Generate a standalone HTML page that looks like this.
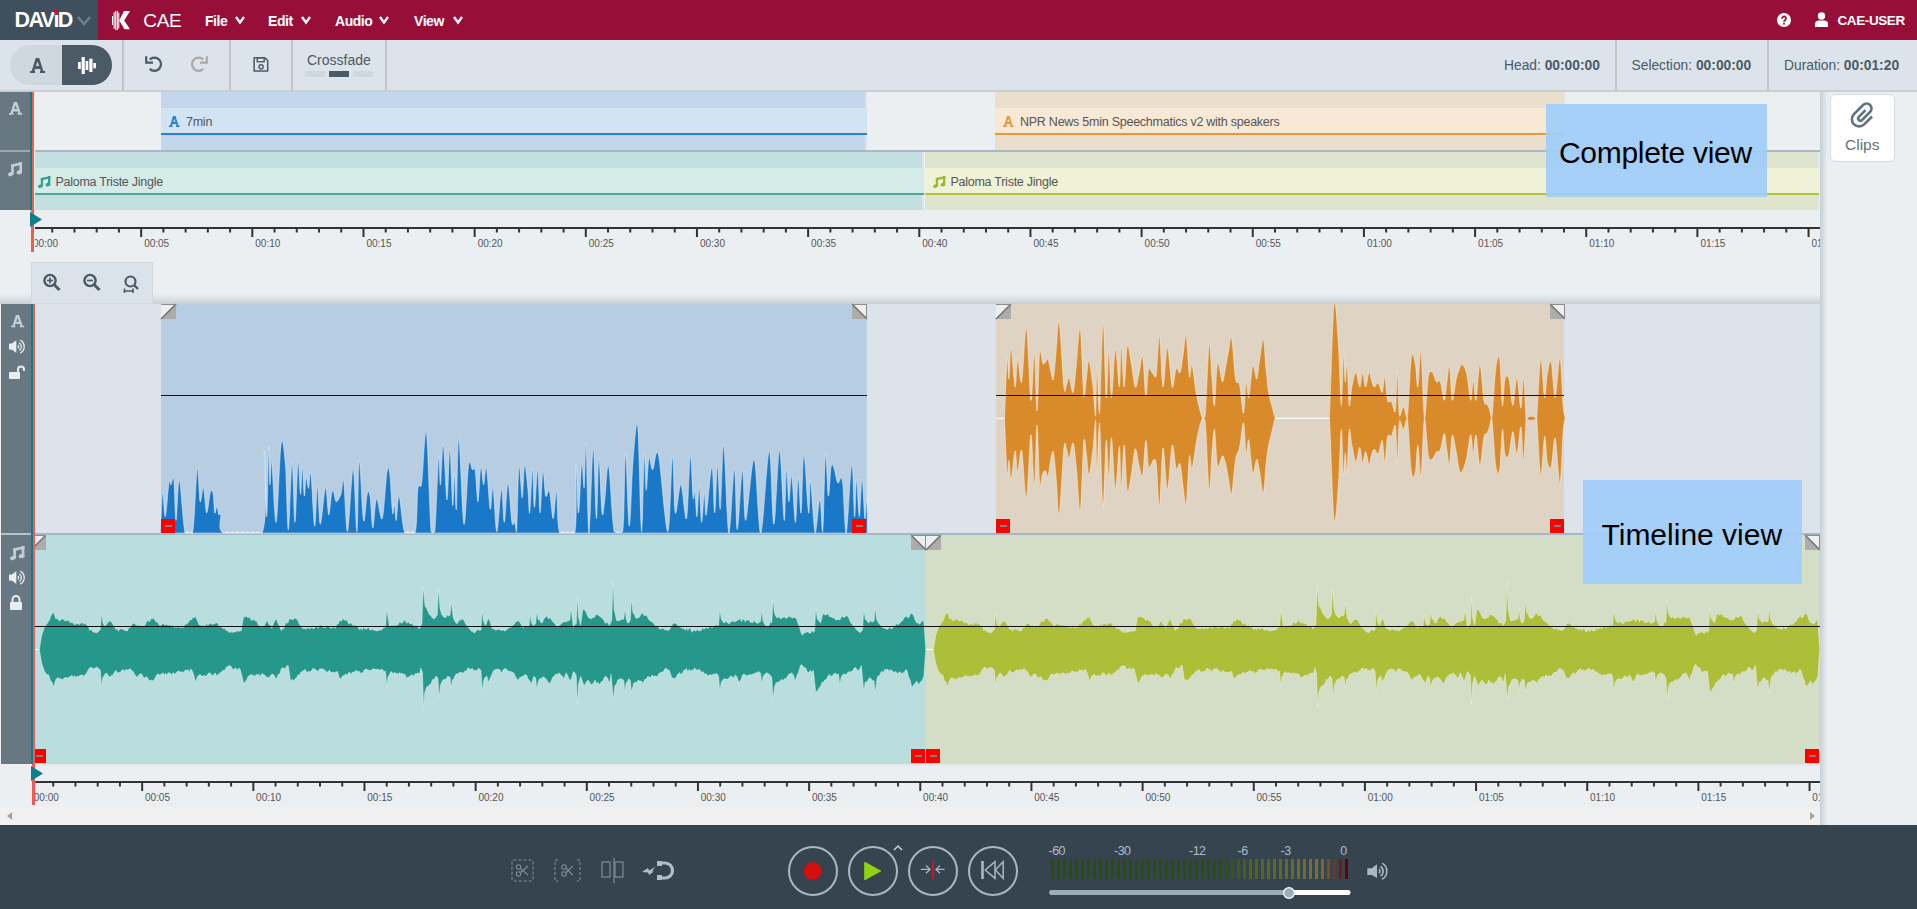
<!DOCTYPE html><html><head><meta charset="utf-8"><style>
*{margin:0;padding:0;box-sizing:border-box}
html,body{width:1917px;height:909px;overflow:hidden;background:#ebeff2;font-family:"Liberation Sans",sans-serif;position:relative}
.ab{position:absolute}
.t{position:absolute;white-space:nowrap;line-height:1}
svg{position:absolute;overflow:visible}
</style></head><body>
<div class="ab" style="left:0px;top:0px;width:1917px;height:40px;background:#970f38;"></div>
<div class="ab" style="left:0px;top:0px;width:98px;height:40px;background:#3e4f5d;"></div>
<div class="t" style="left:14.5px;top:9.50px;font-size:21.5px;color:#fff;font-weight:700;letter-spacing:-1.6px">DAV&#305;D</div>
<div class="ab" style="left:54px;top:10px;width:3px;height:3px;background:#e3001b;"></div>
<svg style="left:77px;top:15.5px;" width="14" height="9" viewBox="0 0 14 9"><polyline points="1,1 7.0,8 13,1" fill="none" stroke="#6a7f8d" stroke-width="2.6"/></svg>
<svg style="left:111px;top:10px;" width="20" height="21" viewBox="0 0 20 21"><g fill="#fff"><rect x="1" y="6" width="1.1" height="9"/><rect x="2.6" y="2.2" width="1.1" height="16.6"/><rect x="4.2" y="0.9" width="1.1" height="19.2"/><rect x="5.8" y="0.9" width="1.1" height="19.2"/><rect x="7.3" y="2.6" width="1" height="15.8"/><polygon points="13,1 19,1 13.2,10.4 19,19.2 13.5,19.2 8.2,10.4"/></g></svg>
<div class="t" style="left:143.3px;top:10.82px;font-size:19px;color:#fff;font-weight:400;letter-spacing:-0.3px">CAE</div>
<div class="t" style="left:205px;top:13.65px;font-size:14px;color:#fff;font-weight:700;letter-spacing:-0.45px">File</div>
<svg style="left:235px;top:16.3px;" width="10" height="7.5" viewBox="0 0 10 7.5"><polyline points="1,1 5.0,6.5 9,1" fill="none" stroke="#fff" stroke-width="2.3"/></svg>
<div class="t" style="left:268px;top:13.65px;font-size:14px;color:#fff;font-weight:700;letter-spacing:-0.45px">Edit</div>
<svg style="left:301px;top:16.3px;" width="10" height="7.5" viewBox="0 0 10 7.5"><polyline points="1,1 5.0,6.5 9,1" fill="none" stroke="#fff" stroke-width="2.3"/></svg>
<div class="t" style="left:335px;top:13.65px;font-size:14px;color:#fff;font-weight:700;letter-spacing:-0.45px">Audio</div>
<svg style="left:379px;top:16.3px;" width="10" height="7.5" viewBox="0 0 10 7.5"><polyline points="1,1 5.0,6.5 9,1" fill="none" stroke="#fff" stroke-width="2.3"/></svg>
<div class="t" style="left:414px;top:13.65px;font-size:14px;color:#fff;font-weight:700;letter-spacing:-0.45px">View</div>
<svg style="left:453px;top:16.3px;" width="10" height="7.5" viewBox="0 0 10 7.5"><polyline points="1,1 5.0,6.5 9,1" fill="none" stroke="#fff" stroke-width="2.3"/></svg>
<svg style="left:1777px;top:13px;" width="14" height="14" viewBox="0 0 14 14"><circle cx="7" cy="7" r="7" fill="#fff"/><g transform="translate(7,7.3) scale(0.86) translate(-7,-6.8)"><path d="M4.7,5 A2.35,2.35 0 1 1 8.4,6.6 Q7,7.3 7,8.6" fill="none" stroke="#970f38" stroke-width="2"/><rect x="6" y="9.7" width="2" height="2" fill="#970f38"/></g></svg>
<svg style="left:1814px;top:12px;" width="15" height="16" viewBox="0 0 15 16"><circle cx="7.5" cy="4" r="3.7" fill="#fff"/><path d="M1,15 V12 C1,9.5 3,8.6 4.8,8.6 H10.2 C12,8.6 14,9.5 14,12 V15 Z" fill="#fff"/></svg>
<div class="t" style="left:1837.5px;top:13.57px;font-size:13.5px;color:#fff;font-weight:700;letter-spacing:-0.4px">CAE-USER</div>
<div class="ab" style="left:0px;top:40px;width:1917px;height:51px;background:#dce3ea;"></div>
<div class="ab" style="left:0px;top:90px;width:1917px;height:2px;background:#c9cfd4;"></div>
<div class="ab" style="left:10px;top:45px;width:102px;height:40px;background:#d0d8df;border-radius:20px"></div>
<div class="ab" style="left:62px;top:45px;width:50px;height:40px;background:#4a5a67;border-radius:0 20px 20px 0"></div>
<svg style="left:29.9px;top:57.9px;" width="15.1" height="15" viewBox="0 0 15.1 15"><path transform="scale(1.0000,1.0000)" fill-rule="evenodd" fill="#4a5a67" d="M5.7,0 H9.2 L13.4,13 H15.1 V15 H10.0 V13 H10.7 L10.1,11 H5.0 L4.4,13 H5.1 V15 H0 V13 H1.7 Z M6.0,8.1 H9.1 L7.55,3.6 Z"/></svg>
<svg style="left:0px;top:0px;" width="120" height="90" viewBox="0 0 120 90"><g fill="#fff"><rect x="78" y="62" width="2.8" height="7"/><rect x="81.6" y="57" width="3.2" height="17"/><rect x="85.6" y="61" width="2.7" height="9"/><rect x="89.3" y="58.7" width="3.2" height="13.3"/><rect x="93.3" y="63" width="2.7" height="5.3"/></g></svg>
<div class="ab" style="left:122px;top:40px;width:2px;height:51px;background:#c4c6c6;"></div>
<div class="ab" style="left:229px;top:40px;width:2px;height:51px;background:#c4c6c6;"></div>
<div class="ab" style="left:291px;top:40px;width:2px;height:51px;background:#c4c6c6;"></div>
<div class="ab" style="left:385px;top:40px;width:2px;height:51px;background:#c4c6c6;"></div>
<svg style="left:144px;top:55px;" width="20" height="18" viewBox="0 0 20 18"><path d="M2.2,1.2 V7.6 H9" fill="none" stroke="#4a5a67" stroke-width="2.2"/><path d="M5.73,4.53 A6.6,6.6 0 1 1 5.73,13.87" fill="none" stroke="#4a5a67" stroke-width="2.2"/></svg>
<svg style="left:188.5px;top:55px;" width="20" height="18" viewBox="0 0 20 18"><g transform="translate(20,0) scale(-1,1)"><path d="M2.2,1.2 V7.6 H9" fill="none" stroke="#aaaaaa" stroke-width="2.2"/><path d="M5.73,4.53 A6.6,6.6 0 1 1 5.73,13.87" fill="none" stroke="#aaaaaa" stroke-width="2.2"/></g></svg>
<svg style="left:253px;top:57px;" width="16" height="15" viewBox="0 0 16 15"><path d="M1.1,0.8 H11.9 L14.7,3.6 V14.1 H1.1 Z" fill="none" stroke="#4a5a67" stroke-width="1.5" stroke-linejoin="round"/><rect x="4.2" y="0.8" width="7" height="3.9" fill="none" stroke="#4a5a67" stroke-width="1.4"/><circle cx="8.1" cy="9.8" r="2.1" fill="none" stroke="#4a5a67" stroke-width="1.4"/></svg>
<div class="t" style="left:307px;top:53.15px;font-size:14px;color:#4a5a67;font-weight:400;">Crossfade</div>
<div class="ab" style="left:305px;top:71px;width:20px;height:6px;background:#d0d8df;"></div>
<div class="ab" style="left:329px;top:71px;width:20px;height:6px;background:#4a5a67;"></div>
<div class="ab" style="left:353px;top:71px;width:20px;height:6px;background:#d0d8df;"></div>
<div class="t" style="left:1504px;top:58.82px;font-size:13.8px;color:#4a5a67;font-weight:400;">Head: <b style="font-weight:700">00:00:00</b></div>
<div class="t" style="left:1631.5px;top:58.82px;font-size:13.8px;color:#4a5a67;font-weight:400;">Selection: <b style="font-weight:700">00:00:00</b></div>
<div class="t" style="left:1784px;top:58.82px;font-size:13.8px;color:#4a5a67;font-weight:400;">Duration: <b style="font-weight:700">00:01:20</b></div>
<div class="ab" style="left:1615px;top:40px;width:2px;height:51px;background:#c4c6c6;"></div>
<div class="ab" style="left:1767px;top:40px;width:2px;height:51px;background:#c4c6c6;"></div>
<div class="ab" style="left:0px;top:92px;width:30px;height:118px;background:#687883;"></div>
<div class="ab" style="left:0px;top:150px;width:30px;height:2px;background:#9aa9b3;"></div>
<svg style="left:8.6px;top:102.2px;" width="13.2" height="12.8" viewBox="0 0 13.2 12.8"><path transform="scale(0.8742,0.8533)" fill-rule="evenodd" fill="#c2ced6" d="M5.7,0 H9.2 L13.4,13 H15.1 V15 H10.0 V13 H10.7 L10.1,11 H5.0 L4.4,13 H5.1 V15 H0 V13 H1.7 Z M6.0,8.1 H9.1 L7.55,3.6 Z"/></svg>
<svg style="left:8px;top:162px;" width="14" height="14.2" viewBox="0 0 14 14.2"><g transform="scale(1.0000,1.0000)" fill="#c2ced6"><polygon points="3.2,2.5 14,0 14,2.8 3.2,5.3"/><rect x="3.2" y="2.5" width="2.6" height="10"/><rect x="11.4" y="0" width="2.6" height="11.5"/><ellipse cx="2.7" cy="12.2" rx="2.7" ry="2" transform="rotate(-18 2.7 12.2)"/><ellipse cx="11.3" cy="10.2" rx="2.75" ry="2.1" transform="rotate(-18 11.3 10.2)"/></g></svg>
<div class="ab" style="left:865px;top:92px;width:2px;height:58px;background:#dfe4e8;"></div>
<div class="ab" style="left:161px;top:92px;width:704px;height:58px;background:#c2d7eb;"></div>
<div class="ab" style="left:161px;top:108px;width:706px;height:25px;background:#d2e4f4;"></div>
<div class="ab" style="left:161px;top:133px;width:706px;height:2px;background:#2b7fd1;"></div>
<svg style="left:168.8px;top:115.9px;" width="10.7" height="11" viewBox="0 0 10.7 11"><path transform="scale(0.7086,0.7333)" fill-rule="evenodd" fill="#2b7fd1" d="M5.7,0 H9.2 L13.4,13 H15.1 V15 H10.0 V13 H10.7 L10.1,11 H5.0 L4.4,13 H5.1 V15 H0 V13 H1.7 Z M6.0,8.1 H9.1 L7.55,3.6 Z"/></svg>
<div class="t" style="left:186px;top:115.72px;font-size:12.5px;color:#555;font-weight:400;letter-spacing:-0.25px">7min</div>
<div class="ab" style="left:1563px;top:92px;width:2px;height:58px;background:#dfe4e8;"></div>
<div class="ab" style="left:995px;top:92px;width:568px;height:58px;background:#e9dfcc;"></div>
<div class="ab" style="left:995px;top:108px;width:570px;height:25px;background:#f8e9d6;"></div>
<div class="ab" style="left:995px;top:133px;width:570px;height:2px;background:#e8963a;"></div>
<svg style="left:1002.8px;top:115.9px;" width="10.7" height="11" viewBox="0 0 10.7 11"><path transform="scale(0.7086,0.7333)" fill-rule="evenodd" fill="#e8963a" d="M5.7,0 H9.2 L13.4,13 H15.1 V15 H10.0 V13 H10.7 L10.1,11 H5.0 L4.4,13 H5.1 V15 H0 V13 H1.7 Z M6.0,8.1 H9.1 L7.55,3.6 Z"/></svg>
<div class="t" style="left:1020px;top:115.72px;font-size:12.5px;color:#555;font-weight:400;letter-spacing:-0.25px">NPR News 5min Speechmatics v2 with speakers</div>
<div class="ab" style="left:35px;top:150px;width:1785px;height:2px;background:#a9b8c4;"></div>
<div class="ab" style="left:922px;top:152px;width:2px;height:58px;background:#dfe4e8;"></div>
<div class="ab" style="left:35px;top:152px;width:887px;height:58px;background:#c3dfdf;"></div>
<div class="ab" style="left:35px;top:168px;width:889px;height:25px;background:#d5ebe7;"></div>
<div class="ab" style="left:35px;top:193px;width:889px;height:2px;background:#4aa79a;"></div>
<svg style="left:37.9px;top:175.7px;" width="12.3" height="11.9" viewBox="0 0 12.3 11.9"><g transform="scale(0.8786,0.8380)" fill="#3a9e8f"><polygon points="3.2,2.5 14,0 14,2.8 3.2,5.3"/><rect x="3.2" y="2.5" width="2.6" height="10"/><rect x="11.4" y="0" width="2.6" height="11.5"/><ellipse cx="2.7" cy="12.2" rx="2.7" ry="2" transform="rotate(-18 2.7 12.2)"/><ellipse cx="11.3" cy="10.2" rx="2.75" ry="2.1" transform="rotate(-18 11.3 10.2)"/></g></svg>
<div class="t" style="left:55.4px;top:176.02px;font-size:12.5px;color:#555;font-weight:400;letter-spacing:-0.25px">Paloma Triste Jingle</div>
<div class="ab" style="left:1817px;top:152px;width:2px;height:58px;background:#dfe4e8;"></div>
<div class="ab" style="left:925px;top:152px;width:892px;height:58px;background:#dfe5cc;"></div>
<div class="ab" style="left:925px;top:168px;width:894px;height:25px;background:#eff2d6;"></div>
<div class="ab" style="left:925px;top:193px;width:894px;height:2px;background:#b3c33c;"></div>
<svg style="left:932.9px;top:175.7px;" width="12.3" height="11.9" viewBox="0 0 12.3 11.9"><g transform="scale(0.8786,0.8380)" fill="#9fb52e"><polygon points="3.2,2.5 14,0 14,2.8 3.2,5.3"/><rect x="3.2" y="2.5" width="2.6" height="10"/><rect x="11.4" y="0" width="2.6" height="11.5"/><ellipse cx="2.7" cy="12.2" rx="2.7" ry="2" transform="rotate(-18 2.7 12.2)"/><ellipse cx="11.3" cy="10.2" rx="2.75" ry="2.1" transform="rotate(-18 11.3 10.2)"/></g></svg>
<div class="t" style="left:950.4px;top:176.02px;font-size:12.5px;color:#555;font-weight:400;letter-spacing:-0.25px">Paloma Triste Jingle</div>
<svg style="left:30px;top:227px;" width="1790" height="12" viewBox="0 0 1790 12"><rect x="5" y="0" width="1785" height="2" fill="#333"/><rect x="21.23" y="2" width="2" height="3.5" fill="#333"/><rect x="43.46" y="2" width="2" height="3.5" fill="#333"/><rect x="65.70" y="2" width="2" height="3.5" fill="#333"/><rect x="87.93" y="2" width="2" height="3.5" fill="#333"/><rect x="110.16" y="2" width="2" height="8" fill="#333"/><rect x="132.39" y="2" width="2" height="3.5" fill="#333"/><rect x="154.62" y="2" width="2" height="3.5" fill="#333"/><rect x="176.86" y="2" width="2" height="3.5" fill="#333"/><rect x="199.09" y="2" width="2" height="3.5" fill="#333"/><rect x="221.32" y="2" width="2" height="8" fill="#333"/><rect x="243.55" y="2" width="2" height="3.5" fill="#333"/><rect x="265.78" y="2" width="2" height="3.5" fill="#333"/><rect x="288.02" y="2" width="2" height="3.5" fill="#333"/><rect x="310.25" y="2" width="2" height="3.5" fill="#333"/><rect x="332.48" y="2" width="2" height="8" fill="#333"/><rect x="354.71" y="2" width="2" height="3.5" fill="#333"/><rect x="376.94" y="2" width="2" height="3.5" fill="#333"/><rect x="399.18" y="2" width="2" height="3.5" fill="#333"/><rect x="421.41" y="2" width="2" height="3.5" fill="#333"/><rect x="443.64" y="2" width="2" height="8" fill="#333"/><rect x="465.87" y="2" width="2" height="3.5" fill="#333"/><rect x="488.10" y="2" width="2" height="3.5" fill="#333"/><rect x="510.34" y="2" width="2" height="3.5" fill="#333"/><rect x="532.57" y="2" width="2" height="3.5" fill="#333"/><rect x="554.80" y="2" width="2" height="8" fill="#333"/><rect x="577.03" y="2" width="2" height="3.5" fill="#333"/><rect x="599.26" y="2" width="2" height="3.5" fill="#333"/><rect x="621.50" y="2" width="2" height="3.5" fill="#333"/><rect x="643.73" y="2" width="2" height="3.5" fill="#333"/><rect x="665.96" y="2" width="2" height="8" fill="#333"/><rect x="688.19" y="2" width="2" height="3.5" fill="#333"/><rect x="710.42" y="2" width="2" height="3.5" fill="#333"/><rect x="732.66" y="2" width="2" height="3.5" fill="#333"/><rect x="754.89" y="2" width="2" height="3.5" fill="#333"/><rect x="777.12" y="2" width="2" height="8" fill="#333"/><rect x="799.35" y="2" width="2" height="3.5" fill="#333"/><rect x="821.58" y="2" width="2" height="3.5" fill="#333"/><rect x="843.82" y="2" width="2" height="3.5" fill="#333"/><rect x="866.05" y="2" width="2" height="3.5" fill="#333"/><rect x="888.28" y="2" width="2" height="8" fill="#333"/><rect x="910.51" y="2" width="2" height="3.5" fill="#333"/><rect x="932.74" y="2" width="2" height="3.5" fill="#333"/><rect x="954.98" y="2" width="2" height="3.5" fill="#333"/><rect x="977.21" y="2" width="2" height="3.5" fill="#333"/><rect x="999.44" y="2" width="2" height="8" fill="#333"/><rect x="1021.67" y="2" width="2" height="3.5" fill="#333"/><rect x="1043.90" y="2" width="2" height="3.5" fill="#333"/><rect x="1066.14" y="2" width="2" height="3.5" fill="#333"/><rect x="1088.37" y="2" width="2" height="3.5" fill="#333"/><rect x="1110.60" y="2" width="2" height="8" fill="#333"/><rect x="1132.83" y="2" width="2" height="3.5" fill="#333"/><rect x="1155.06" y="2" width="2" height="3.5" fill="#333"/><rect x="1177.30" y="2" width="2" height="3.5" fill="#333"/><rect x="1199.53" y="2" width="2" height="3.5" fill="#333"/><rect x="1221.76" y="2" width="2" height="8" fill="#333"/><rect x="1243.99" y="2" width="2" height="3.5" fill="#333"/><rect x="1266.22" y="2" width="2" height="3.5" fill="#333"/><rect x="1288.46" y="2" width="2" height="3.5" fill="#333"/><rect x="1310.69" y="2" width="2" height="3.5" fill="#333"/><rect x="1332.92" y="2" width="2" height="8" fill="#333"/><rect x="1355.15" y="2" width="2" height="3.5" fill="#333"/><rect x="1377.38" y="2" width="2" height="3.5" fill="#333"/><rect x="1399.62" y="2" width="2" height="3.5" fill="#333"/><rect x="1421.85" y="2" width="2" height="3.5" fill="#333"/><rect x="1444.08" y="2" width="2" height="8" fill="#333"/><rect x="1466.31" y="2" width="2" height="3.5" fill="#333"/><rect x="1488.54" y="2" width="2" height="3.5" fill="#333"/><rect x="1510.78" y="2" width="2" height="3.5" fill="#333"/><rect x="1533.01" y="2" width="2" height="3.5" fill="#333"/><rect x="1555.24" y="2" width="2" height="8" fill="#333"/><rect x="1577.47" y="2" width="2" height="3.5" fill="#333"/><rect x="1599.70" y="2" width="2" height="3.5" fill="#333"/><rect x="1621.94" y="2" width="2" height="3.5" fill="#333"/><rect x="1644.17" y="2" width="2" height="3.5" fill="#333"/><rect x="1666.40" y="2" width="2" height="8" fill="#333"/><rect x="1688.63" y="2" width="2" height="3.5" fill="#333"/><rect x="1710.86" y="2" width="2" height="3.5" fill="#333"/><rect x="1733.10" y="2" width="2" height="3.5" fill="#333"/><rect x="1755.33" y="2" width="2" height="3.5" fill="#333"/><rect x="1777.56" y="2" width="2" height="8" fill="#333"/></svg>
<div class="ab" style="left:35px;top:227px;width:1785px;height:30px;overflow:hidden"><div class="t" style="left:-2.00px;top:12.03px;font-size:10px;color:#555">00:00</div><div class="t" style="left:109.16px;top:12.03px;font-size:10px;color:#555">00:05</div><div class="t" style="left:220.32px;top:12.03px;font-size:10px;color:#555">00:10</div><div class="t" style="left:331.48px;top:12.03px;font-size:10px;color:#555">00:15</div><div class="t" style="left:442.64px;top:12.03px;font-size:10px;color:#555">00:20</div><div class="t" style="left:553.80px;top:12.03px;font-size:10px;color:#555">00:25</div><div class="t" style="left:664.96px;top:12.03px;font-size:10px;color:#555">00:30</div><div class="t" style="left:776.12px;top:12.03px;font-size:10px;color:#555">00:35</div><div class="t" style="left:887.28px;top:12.03px;font-size:10px;color:#555">00:40</div><div class="t" style="left:998.44px;top:12.03px;font-size:10px;color:#555">00:45</div><div class="t" style="left:1109.60px;top:12.03px;font-size:10px;color:#555">00:50</div><div class="t" style="left:1220.76px;top:12.03px;font-size:10px;color:#555">00:55</div><div class="t" style="left:1331.92px;top:12.03px;font-size:10px;color:#555">01:00</div><div class="t" style="left:1443.08px;top:12.03px;font-size:10px;color:#555">01:05</div><div class="t" style="left:1554.24px;top:12.03px;font-size:10px;color:#555">01:10</div><div class="t" style="left:1665.40px;top:12.03px;font-size:10px;color:#555">01:15</div><div class="t" style="left:1776.56px;top:12.03px;font-size:10px;color:#555">01:20</div></div>
<div class="ab" style="left:31px;top:92px;width:3px;height:160px;background:#f25a54;"></div>
<div class="ab" style="left:30px;top:92px;width:2px;height:118px;background:#0c7f8c;"></div>
<svg style="left:30px;top:212px;" width="12" height="15" viewBox="0 0 12 15"><polygon points="0,0 12,7.5 0,15" fill="#0c7f8c"/></svg>
<div class="ab" style="left:0px;top:294px;width:1820px;height:10px;background:linear-gradient(to bottom, rgba(215,221,226,0) 0%, rgba(210,216,222,0.6) 50%, rgba(200,207,213,1) 100%);"></div>
<div class="ab" style="left:31px;top:262px;width:122px;height:42px;background:#dce2e9;border:1px solid #d3d9df"></div>
<svg style="left:43px;top:273px;" width="17" height="17" viewBox="0 0 17 17"><circle cx="7" cy="7.5" r="5.6" fill="none" stroke="#4a5a67" stroke-width="2.4"/><line x1="11" y1="11.5" x2="16.5" y2="17" stroke="#4a5a67" stroke-width="3"/><line x1="4" y1="7.5" x2="10" y2="7.5" stroke="#4a5a67" stroke-width="1.7"/><line x1="7" y1="4.5" x2="7" y2="10.5" stroke="#4a5a67" stroke-width="1.7"/></svg>
<svg style="left:83px;top:273px;" width="17" height="17" viewBox="0 0 17 17"><circle cx="7" cy="7.5" r="5.6" fill="none" stroke="#4a5a67" stroke-width="2.4"/><line x1="11" y1="11.5" x2="16.5" y2="17" stroke="#4a5a67" stroke-width="3"/><line x1="4" y1="7.5" x2="10" y2="7.5" stroke="#4a5a67" stroke-width="1.7"/></svg>
<svg style="left:123px;top:275px;" width="17" height="19" viewBox="0 0 17 19"><circle cx="7.5" cy="6.5" r="5" fill="none" stroke="#4a5a67" stroke-width="2.2"/><line x1="11" y1="10" x2="15" y2="14" stroke="#4a5a67" stroke-width="2.4"/><path d="M1.5,13.5 V18 M1.5,16 H10 M10,13.5 V18" fill="none" stroke="#4a5a67" stroke-width="1.6"/></svg>
<div class="ab" style="left:1px;top:304px;width:30px;height:460px;background:#687883;"></div>
<div class="ab" style="left:1px;top:533px;width:30px;height:2px;background:#b3c3cd;"></div>
<div class="ab" style="left:35px;top:304px;width:1785px;height:229px;background:#dce3ea;"></div>
<div class="ab" style="left:35px;top:535px;width:1785px;height:229px;background:#dce3ea;"></div>
<div class="ab" style="left:35px;top:533px;width:1785px;height:2px;background:#a3b8c6;"></div>
<div class="ab" style="left:161px;top:304px;width:706px;height:229px;background:#b7cde2;"></div>
<div class="ab" style="left:996px;top:304px;width:568px;height:229px;background:#dfd4c3;"></div>
<div class="ab" style="left:35px;top:535px;width:891px;height:229px;background:#b9dedd;"></div>
<div class="ab" style="left:926px;top:535px;width:894px;height:229px;background:#d4ddc5;"></div>
<svg style="left:0;top:0" width="1917" height="909" viewBox="0 0 1917 909"><line x1="161" y1="532.2" x2="866" y2="532.2" stroke="#fff" stroke-opacity="0.8" stroke-width="1" stroke-dasharray="3,2"/><path d="M160.6,533L160.6,533.0C160.9,526.2 161.7,495.0 162.5,492.3C163.3,489.6 164.2,518.4 165.3,516.7C166.4,515.0 168.1,487.3 169.1,482.0C170.0,476.7 170.2,485.3 171.0,484.8C171.7,484.3 172.9,473.2 173.8,479.2C174.6,485.1 175.1,520.3 176.0,520.4C177.0,520.6 177.9,478.0 179.4,480.1C180.9,482.2 182.9,524.2 185.0,533.0C187.2,533.0 190.5,533.0 192.6,533.0C194.6,522.3 196.0,474.1 197.3,468.8C198.5,463.6 199.0,498.5 200.1,501.7C201.1,504.8 202.4,485.7 203.5,487.6C204.5,489.5 205.5,512.1 206.6,512.9C207.8,513.7 209.3,495.4 210.4,492.3C211.5,489.2 212.5,490.7 213.2,494.2C213.9,497.6 214.1,510.9 214.7,512.9C215.3,515.0 216.3,506.0 217.0,506.4C217.7,506.7 218.2,513.4 218.8,514.8C219.5,516.2 219.9,511.8 220.7,514.8C221.5,517.8 216.7,530.0 223.5,533.0C230.4,533.0 255.3,533.0 262.0,533.0C268.8,519.3 263.5,453.7 264.3,451.0C265.1,448.3 266.0,517.4 266.7,516.7C267.5,516.0 268.1,452.2 268.6,446.9C269.1,441.6 269.4,482.2 269.9,484.8C270.5,487.3 270.8,456.0 271.8,462.3C272.8,468.5 274.6,525.4 276.1,522.3C277.7,519.2 279.6,452.9 281.2,443.5C282.8,434.1 284.3,451.6 285.5,466.0C286.7,480.4 287.2,530.4 288.3,529.8C289.4,529.2 291.0,463.5 292.1,462.3C293.2,461.0 293.9,522.5 294.9,522.3C295.9,522.1 297.2,466.0 298.1,461.3C299.0,456.6 299.8,493.4 300.5,494.2C301.3,494.9 301.8,465.7 302.4,466.0C303.0,466.3 303.7,494.2 304.3,496.0C304.9,497.9 305.5,478.5 306.2,477.3C306.9,476.0 307.8,489.2 308.6,488.5C309.4,487.9 309.9,467.3 310.9,473.5C311.9,479.8 313.5,524.0 314.6,526.1C315.7,528.1 316.5,486.0 317.4,485.7C318.4,485.4 318.9,523.9 320.3,524.2C321.6,524.5 324.1,489.2 325.5,487.6C326.9,486.0 327.7,513.7 328.7,514.8C329.7,515.9 330.7,498.1 331.5,494.2C332.3,490.3 332.6,490.1 333.4,491.3C334.2,492.6 335.0,501.2 336.2,501.7C337.5,502.1 339.7,497.6 340.9,494.2C342.2,490.7 342.6,474.8 343.7,481.0C344.8,487.3 345.9,533.0 347.5,531.7C349.1,529.7 351.6,468.8 353.1,468.8C354.7,468.8 355.8,533.0 356.9,531.7C357.9,530.3 358.2,462.3 359.3,460.4C360.4,458.5 362.1,514.8 363.5,520.4C364.8,526.1 366.1,498.2 367.2,494.2C368.3,490.1 369.1,490.4 370.0,496.0C371.0,501.7 371.7,527.5 372.8,527.9C373.9,528.4 375.0,500.4 376.6,498.9C378.2,497.3 380.5,522.9 382.2,518.6C384.0,514.2 385.7,480.1 386.9,472.6C388.2,465.1 388.8,466.8 389.7,473.5C390.7,480.2 391.8,507.8 392.6,512.9C393.3,518.1 393.8,503.2 394.4,504.5C395.1,505.7 395.5,521.8 396.3,520.4C397.1,519.0 397.7,493.9 399.1,496.0C400.5,498.1 402.1,526.8 404.8,533.0C407.4,533.0 412.9,533.0 415.1,533.0C417.3,525.6 416.8,496.9 417.9,488.5C419.0,480.2 420.3,492.3 421.7,482.9C423.1,473.5 424.8,424.1 426.4,432.2C427.9,440.4 429.6,515.1 431.1,531.7C432.5,533.0 433.6,533.0 434.8,531.7C436.1,519.3 437.6,465.4 438.6,457.6C439.5,449.8 439.7,487.0 440.4,484.8C441.2,482.6 442.2,441.9 443.3,444.4C444.4,446.9 445.9,499.2 447.0,499.8C448.1,500.4 448.9,447.3 449.8,448.2C450.8,449.1 451.9,501.2 452.7,505.4C453.4,509.6 453.9,472.9 454.5,473.5C455.2,474.2 455.7,515.1 456.4,509.2C457.1,503.2 457.6,435.4 458.8,437.9C460.1,440.4 462.3,519.6 463.9,524.2C465.5,528.7 467.2,474.2 468.6,465.1C470.0,456.0 471.3,468.8 472.4,469.8C473.5,470.7 474.2,465.4 475.2,470.7C476.1,476.0 477.1,502.3 478.0,501.7C478.9,501.0 479.9,469.8 480.8,467.0C481.8,464.1 482.7,484.6 483.6,484.8C484.6,484.9 485.4,463.8 486.5,467.9C487.6,472.0 489.1,505.9 490.2,509.2C491.3,512.5 491.9,483.8 493.0,487.6C494.1,491.3 495.4,531.5 496.8,531.7C498.2,531.8 500.2,490.1 501.5,488.5C502.7,487.0 503.2,523.2 504.3,522.3C505.4,521.4 506.8,482.9 508.1,482.9C509.3,482.9 510.8,515.7 511.9,522.3C513.0,528.9 513.9,520.7 514.7,522.3C515.5,523.9 515.9,533.0 516.6,531.7C517.3,522.3 518.1,471.6 519.0,466.0C520.0,460.4 521.3,498.1 522.2,497.9C523.1,497.8 523.7,466.6 524.6,465.1C525.6,463.5 527.0,480.6 527.8,488.5C528.7,496.5 528.9,516.4 529.7,512.9C530.5,509.5 531.8,468.8 532.5,467.9C533.3,467.0 533.5,507.1 534.4,507.3C535.3,507.5 536.9,467.9 537.8,468.8C538.7,469.8 539.2,512.6 540.0,512.9C540.9,513.2 541.9,473.5 542.9,470.7C543.8,467.9 544.6,492.6 545.7,496.0C546.8,499.5 548.2,487.6 549.4,491.3C550.7,495.1 552.0,518.6 553.2,518.6C554.4,518.6 555.5,488.9 556.6,491.3C557.7,493.8 556.7,526.1 559.8,533.0C562.8,533.0 572.1,533.0 574.8,533.0C577.5,521.7 575.5,468.4 576.1,465.1C576.7,461.7 577.6,513.2 578.5,512.9C579.5,512.6 580.8,467.4 581.7,463.2C582.7,459.0 583.5,490.8 584.2,487.6C584.9,484.4 585.3,436.3 586.1,443.9C586.8,451.4 587.7,532.4 588.9,533.0C590.1,533.0 591.9,449.7 593.2,447.3C594.4,444.9 595.4,516.8 596.4,518.6C597.3,520.3 597.9,458.5 598.8,457.6C599.8,456.6 601.0,505.9 602.0,512.9C603.0,520.0 603.7,507.6 604.8,499.8C605.9,492.0 607.0,460.7 608.6,466.0C610.2,471.3 611.9,520.7 614.2,531.7C616.6,533.0 620.8,533.0 622.7,531.7C624.6,518.7 624.4,454.8 625.5,453.8C626.6,452.9 628.0,524.8 629.2,526.1C630.5,527.3 631.6,477.9 633.0,461.3C634.4,444.8 636.3,414.9 637.7,426.6C639.1,438.3 640.4,527.0 641.5,531.7C642.6,533.0 643.5,461.6 644.3,454.8C645.1,447.9 645.4,489.8 646.2,490.4C646.9,491.0 647.9,462.0 649.0,458.5C650.1,455.1 651.2,470.4 652.7,469.8C654.3,469.1 655.9,444.4 658.4,454.8C660.9,465.1 665.4,531.4 667.7,531.7C670.1,532.0 671.2,459.8 672.4,456.6C673.7,453.5 673.8,508.2 675.3,512.9C676.7,517.6 679.0,483.8 680.9,484.8C682.8,485.7 685.0,523.4 686.5,518.6C688.1,513.7 689.2,459.1 690.3,455.7C691.4,452.3 692.3,492.1 693.1,497.9C693.9,503.7 694.4,487.3 695.0,490.4C695.6,493.5 696.1,517.3 696.9,516.7C697.6,516.1 698.5,485.7 699.3,486.7C700.1,487.6 700.7,521.4 701.5,522.3C702.4,523.2 703.6,493.5 704.4,492.3C705.1,491.0 705.0,519.0 706.2,514.8C707.5,510.6 710.5,467.3 711.9,467.0C713.3,466.6 713.8,513.2 714.7,512.9C715.6,512.6 716.6,465.7 717.5,465.1C718.5,464.5 719.3,512.6 720.3,509.2C721.4,505.7 722.3,440.5 723.7,444.4C725.1,448.4 727.0,528.9 728.8,533.0C730.6,533.0 733.0,469.4 734.4,468.8C735.8,468.3 735.9,529.7 737.2,529.8C738.6,530.0 741.1,471.3 742.5,469.8C743.9,468.2 743.7,522.1 745.7,520.4C747.6,518.7 751.6,457.4 754.1,459.5C756.6,461.5 758.2,533.0 760.7,533.0C763.2,531.6 767.0,452.5 769.2,451.0C771.3,449.5 772.1,524.3 773.8,524.2C775.6,524.0 777.8,450.7 779.5,450.1C781.2,449.4 783.0,517.3 784.2,520.4C785.3,523.6 785.6,472.0 786.4,468.8C787.2,465.7 788.0,500.4 788.9,501.7C789.7,502.9 790.6,472.9 791.7,476.3C792.8,479.8 794.4,522.1 795.4,522.3C796.5,522.5 797.3,478.8 798.3,477.3C799.2,475.7 800.1,516.8 801.1,512.9C802.0,509.0 802.6,453.8 803.9,453.8C805.1,453.8 807.5,508.4 808.6,512.9C809.7,517.5 809.4,477.7 810.5,481.0C811.6,484.4 813.6,530.0 815.2,533.0C816.7,533.0 818.6,499.1 819.9,498.9C821.1,498.6 821.7,533.0 822.7,531.7C823.6,524.3 824.6,460.7 825.5,454.8C826.4,448.8 827.4,494.0 828.3,496.0C829.2,498.1 830.2,471.6 831.1,467.0C832.1,462.3 832.8,465.2 833.9,467.9C835.0,470.6 836.3,480.7 837.7,482.9C839.1,485.1 841.0,472.7 842.4,481.0C843.8,489.4 844.6,533.0 846.2,533.0C847.7,530.2 850.4,466.9 851.8,464.1C853.2,461.4 853.8,514.2 854.6,516.7C855.4,519.2 855.7,479.2 856.5,479.2C857.3,479.2 858.4,516.7 859.3,516.7C860.2,516.7 861.2,478.8 862.1,479.2C863.1,479.5 864.1,515.4 864.9,518.6C865.7,521.7 866.4,495.5 866.8,497.9C867.2,500.3 867.3,527.2 867.4,533.0L867.4,533Z" fill="#1a78c8" stroke="#fff" stroke-opacity="0.55" stroke-width="0.8"/><line x1="996" y1="418.3" x2="1564" y2="418.3" stroke="#fff" stroke-width="1"/><path d="M1004.5,418.3L1004.5,418.3C1005.0,408.5 1006.4,365.9 1007.2,359.4C1007.9,352.9 1008.4,381.2 1009.0,379.2C1009.7,377.2 1010.1,346.2 1011.1,347.5C1012.1,348.9 1014.0,385.2 1015.1,387.1C1016.2,389.1 1016.6,360.3 1017.7,359.4C1018.8,358.5 1020.2,387.1 1021.7,381.9C1023.1,376.6 1024.9,324.6 1026.4,327.7C1028.0,330.8 1029.6,396.2 1030.9,400.3C1032.2,404.5 1033.4,351.1 1034.4,352.8C1035.4,354.6 1036.1,410.9 1037.0,410.9C1037.9,410.9 1038.7,360.7 1039.6,352.8C1040.6,344.9 1041.8,361.8 1042.8,363.4C1043.8,365.0 1044.6,362.9 1045.5,362.3C1046.3,361.6 1047.2,357.9 1048.1,359.4C1049.0,360.9 1049.9,367.8 1050.7,371.1C1051.6,374.4 1052.5,382.7 1053.4,379.2C1054.3,375.7 1055.3,359.5 1056.3,350.1C1057.2,340.6 1057.9,316.3 1059.2,322.4C1060.5,328.6 1062.7,376.8 1063.9,387.1C1065.2,397.5 1065.7,386.2 1066.6,384.7C1067.5,383.1 1068.1,376.6 1069.2,377.9C1070.3,379.2 1071.9,395.3 1073.2,392.4C1074.4,389.5 1075.6,371.1 1076.7,360.6C1077.9,350.0 1079.1,323.3 1080.3,329.0C1081.5,334.8 1082.7,386.8 1083.7,395.1C1084.8,403.3 1085.5,384.3 1086.4,378.6C1087.3,372.8 1087.9,359.3 1089.0,360.7C1090.1,362.2 1091.9,377.9 1093.0,387.1C1094.1,396.4 1095.0,418.3 1095.6,416.2C1096.3,412.7 1096.3,366.5 1096.9,366.0C1097.6,365.6 1098.6,418.3 1099.6,413.5C1100.6,406.1 1101.9,323.8 1103.0,321.1C1104.1,318.5 1105.2,392.9 1106.2,397.7C1107.2,402.5 1107.9,350.2 1108.8,350.2C1109.7,350.2 1110.4,397.9 1111.5,397.7C1112.6,397.5 1114.1,350.6 1115.4,348.9C1116.7,347.1 1118.4,387.8 1119.4,387.1C1120.4,386.5 1120.4,344.9 1121.2,344.9C1122.0,344.9 1123.1,386.9 1124.1,387.1C1125.2,387.4 1126.1,350.2 1127.3,346.2C1128.5,342.3 1130.0,356.6 1131.3,363.4C1132.6,370.2 1134.0,385.3 1135.2,387.1C1136.5,388.9 1137.7,379.2 1138.9,374.2C1140.2,369.1 1141.5,353.1 1142.6,356.8C1143.8,360.5 1144.8,394.2 1145.8,396.4C1146.8,398.6 1147.6,374.2 1148.4,370.0C1149.3,365.8 1150.2,370.4 1151.1,371.3C1152.0,372.1 1152.8,374.5 1153.7,374.9C1154.6,375.4 1155.4,380.5 1156.4,373.9C1157.3,367.4 1158.4,333.4 1159.5,335.6C1160.6,337.8 1161.6,385.2 1163.0,387.1C1164.3,389.1 1165.9,347.5 1167.4,347.5C1169.0,347.5 1170.7,383.6 1172.2,387.1C1173.7,390.7 1174.8,371.1 1176.2,368.7C1177.5,366.2 1179.0,375.0 1180.1,372.6C1181.3,370.3 1182.1,360.6 1183.2,354.5C1184.2,348.3 1185.2,332.0 1186.2,335.6C1187.2,339.3 1188.4,371.7 1189.4,376.6C1190.3,381.4 1190.9,362.1 1192.0,364.7C1193.1,367.3 1194.8,385.3 1196.0,392.4C1197.2,399.6 1198.2,403.2 1199.3,407.5C1200.4,411.8 1201.6,416.9 1202.6,418.3C1203.6,418.3 1204.1,418.3 1205.2,416.2C1206.3,403.7 1208.1,350.2 1209.2,343.6C1210.3,337.0 1210.9,366.3 1211.8,376.6C1212.7,387.0 1213.5,407.8 1214.5,405.6C1215.4,403.4 1216.3,367.3 1217.6,363.4C1218.9,359.4 1221.1,381.1 1222.4,381.9C1223.7,382.6 1224.4,372.8 1225.5,367.7C1226.5,362.6 1227.5,356.1 1228.5,351.2C1229.6,346.3 1230.4,333.6 1231.6,338.3C1232.8,343.0 1234.3,371.5 1235.6,379.2C1236.9,386.9 1238.2,378.8 1239.5,384.5C1240.9,390.2 1242.4,414.0 1243.5,413.5C1244.6,413.1 1245.3,384.5 1246.1,381.9C1247.0,379.2 1247.7,400.3 1248.8,397.7C1249.9,395.1 1251.4,369.1 1252.7,366.0C1254.1,362.9 1255.6,379.9 1256.7,379.2C1257.8,378.6 1258.2,368.7 1259.3,362.1C1260.4,355.5 1262.2,338.6 1263.3,339.6C1264.4,340.6 1265.1,359.1 1265.9,367.9C1266.8,376.7 1267.5,385.7 1268.6,392.4C1269.7,399.2 1271.4,404.0 1272.5,408.3C1273.6,412.6 1274.3,416.6 1275.2,418.3C1276.1,418.3 1276.9,418.3 1277.8,418.3C1278.6,418.3 1279.5,418.3 1280.4,418.3C1281.2,418.3 1282.1,418.3 1282.9,418.3C1283.8,418.3 1284.7,418.3 1285.5,418.3C1286.4,418.3 1287.2,418.3 1288.1,418.3C1289.0,418.3 1289.8,418.3 1290.7,418.3C1291.5,418.3 1292.4,418.3 1293.3,418.3C1294.1,418.3 1295.0,418.3 1295.8,418.3C1296.7,418.3 1297.6,418.3 1298.4,418.3C1299.3,418.3 1300.1,418.3 1301.0,418.3C1301.9,418.3 1302.7,418.3 1303.6,418.3C1304.5,418.3 1305.3,418.3 1306.2,418.3C1307.0,418.3 1307.9,418.3 1308.8,418.3C1309.6,418.3 1310.5,418.3 1311.3,418.3C1312.2,418.3 1313.1,418.3 1313.9,418.3C1314.8,418.3 1315.6,418.3 1316.5,418.3C1317.4,418.3 1318.2,418.3 1319.1,418.3C1319.9,418.3 1320.8,418.3 1321.7,418.3C1322.5,418.3 1323.4,418.3 1324.2,418.3C1325.1,418.3 1326.0,418.3 1326.8,418.3C1327.7,418.3 1328.2,418.3 1329.4,418.3C1330.6,399.5 1332.5,318.4 1333.9,305.3C1335.4,292.2 1336.9,322.9 1338.1,339.6C1339.4,356.3 1340.4,403.0 1341.3,405.6C1342.2,408.3 1342.7,359.4 1343.4,355.5C1344.1,351.5 1344.6,380.5 1345.3,381.9C1345.9,383.2 1346.4,359.4 1347.1,363.4C1347.8,367.3 1348.4,401.7 1349.2,405.6C1350.0,409.6 1350.8,392.6 1351.9,387.1C1353.0,381.6 1354.5,372.6 1355.8,372.6C1357.1,372.6 1358.7,387.1 1359.8,387.1C1360.9,387.1 1361.5,372.6 1362.4,372.6C1363.4,372.6 1364.5,387.1 1365.6,387.1C1366.7,387.1 1368.0,373.6 1369.0,372.6C1370.0,371.6 1370.8,378.8 1371.7,381.3C1372.5,383.7 1373.2,386.8 1374.3,387.1C1375.4,387.5 1376.9,382.3 1378.3,383.2C1379.6,384.1 1381.1,393.5 1382.2,392.4C1383.3,391.3 1384.0,375.3 1384.9,376.6C1385.7,377.9 1386.4,396.2 1387.5,400.3C1388.6,404.5 1390.1,399.9 1391.5,401.7C1392.8,403.4 1394.5,416.0 1395.4,410.9C1396.4,405.8 1396.6,370.4 1397.3,371.3C1397.9,372.2 1398.4,410.2 1399.4,416.2C1400.4,418.3 1402.0,406.6 1403.4,406.9C1404.7,407.3 1406.0,418.3 1407.3,418.3C1408.6,410.2 1410.0,367.2 1411.3,358.1C1412.6,348.9 1414.1,358.5 1415.2,363.4C1416.3,368.2 1416.9,389.1 1417.9,387.1C1418.8,385.2 1419.9,346.3 1421.0,351.5C1422.1,356.7 1423.2,414.1 1424.5,418.3C1425.7,418.3 1427.1,384.2 1428.4,376.6C1429.8,369.0 1431.1,371.7 1432.4,372.6C1433.7,373.5 1435.0,380.3 1436.4,381.9C1437.7,383.4 1439.0,378.8 1440.3,381.9C1441.6,384.9 1443.2,400.2 1444.3,400.3C1445.4,400.5 1446.0,388.3 1446.9,382.5C1447.8,376.8 1448.7,363.0 1449.6,366.0C1450.4,369.0 1451.1,398.1 1452.2,400.3C1453.3,402.5 1455.0,384.3 1456.2,379.2C1457.3,374.1 1458.2,372.1 1459.2,369.7C1460.2,367.3 1461.0,364.0 1462.2,364.7C1463.5,365.4 1465.3,368.0 1466.7,373.9C1468.1,379.9 1469.6,399.2 1470.7,400.3C1471.8,401.4 1472.4,380.5 1473.3,380.5C1474.2,380.5 1474.9,403.0 1476.0,400.3C1477.1,397.7 1478.6,364.7 1479.9,364.7C1481.2,364.7 1482.8,393.8 1483.9,400.3C1485.0,406.9 1485.7,402.6 1486.5,403.9C1487.4,405.2 1488.3,405.9 1489.2,408.3C1490.1,410.7 1490.7,418.3 1491.8,418.3C1492.9,411.7 1494.5,378.5 1495.8,368.7C1497.1,358.8 1498.6,353.3 1499.7,359.4C1500.8,365.6 1501.5,402.3 1502.4,405.6C1503.3,408.9 1503.9,383.6 1505.0,379.2C1506.1,374.8 1507.7,374.8 1509.0,379.2C1510.3,383.6 1511.6,405.8 1512.9,405.6C1514.3,405.4 1515.6,377.5 1516.9,377.9C1518.2,378.3 1519.8,408.3 1520.9,408.3C1522.0,408.3 1522.6,376.2 1523.5,377.9C1524.4,379.6 1525.3,411.8 1526.1,418.3C1527.0,418.3 1527.9,417.1 1528.8,416.7C1529.7,416.4 1530.5,416.2 1531.4,416.2C1532.3,416.2 1533.2,416.4 1534.1,416.7C1534.9,417.1 1535.6,418.3 1536.7,418.3C1537.8,408.7 1539.3,362.8 1540.7,359.4C1542.0,356.0 1543.5,395.3 1544.6,397.7C1545.7,400.1 1546.2,379.9 1547.3,373.9C1548.4,368.0 1549.9,358.1 1551.2,362.1C1552.5,366.0 1553.7,398.4 1555.2,397.7C1556.6,397.0 1558.6,356.8 1559.9,358.1C1561.3,359.4 1562.2,395.6 1563.1,405.6C1564.0,415.7 1564.9,416.2 1565.2,418.3L1565.2,418.3C1564.9,420.5 1564.0,420.8 1563.1,431.6C1562.2,442.4 1561.3,481.9 1559.9,483.0C1558.6,484.1 1556.6,441.1 1555.2,438.3C1553.7,435.5 1552.5,462.6 1551.2,466.5C1549.9,470.3 1548.4,466.5 1547.3,461.6C1546.2,456.6 1545.7,434.2 1544.6,436.5C1543.5,438.8 1542.0,478.5 1540.7,475.5C1539.3,472.5 1537.8,427.6 1536.7,418.3C1535.6,418.3 1534.9,419.5 1534.1,419.9C1533.2,420.2 1532.3,420.4 1531.4,420.4C1530.5,420.4 1529.7,420.2 1528.8,419.9C1527.9,419.5 1527.0,418.3 1526.1,418.3C1525.3,425.2 1524.4,460.0 1523.5,461.5C1522.6,462.9 1522.0,428.1 1520.9,426.9C1519.8,425.7 1518.2,453.4 1516.9,454.1C1515.6,454.9 1514.3,431.5 1512.9,431.5C1511.6,431.4 1510.3,450.0 1509.0,453.9C1507.7,457.8 1506.1,458.7 1505.0,454.6C1503.9,450.5 1503.3,426.9 1502.4,429.4C1501.5,431.9 1500.8,463.4 1499.7,469.5C1498.6,475.6 1497.1,474.6 1495.8,466.0C1494.5,457.5 1492.9,424.7 1491.8,418.3C1490.7,418.3 1490.1,425.3 1489.2,427.9C1488.3,430.5 1487.4,432.3 1486.5,433.8C1485.7,435.3 1485.0,431.8 1483.9,437.1C1482.8,442.3 1481.2,465.7 1479.9,465.4C1478.6,465.0 1477.1,437.1 1476.0,435.1C1474.9,433.1 1474.2,453.5 1473.3,453.4C1472.4,453.3 1471.8,433.9 1470.7,434.6C1469.6,435.3 1468.1,451.4 1466.7,457.5C1465.3,463.7 1463.5,469.5 1462.2,471.4C1461.0,473.4 1460.2,472.6 1459.2,469.4C1458.2,466.1 1457.3,457.5 1456.2,451.7C1455.0,446.0 1453.3,433.0 1452.2,435.1C1451.1,437.1 1450.4,461.5 1449.6,464.0C1448.7,466.4 1447.8,455.0 1446.9,449.9C1446.0,444.9 1445.4,433.6 1444.3,433.6C1443.2,433.5 1441.6,446.6 1440.3,449.7C1439.0,452.8 1437.7,450.6 1436.4,452.1C1435.0,453.6 1433.7,458.2 1432.4,458.8C1431.1,459.4 1429.8,462.5 1428.4,455.8C1427.1,449.0 1425.7,418.3 1424.5,418.3C1423.2,421.7 1422.1,471.6 1421.0,476.1C1419.9,480.6 1418.8,445.8 1417.9,445.2C1416.9,444.7 1416.3,468.7 1415.2,473.0C1414.1,477.3 1412.6,480.0 1411.3,470.9C1410.0,461.8 1408.6,425.3 1407.3,418.3C1406.0,418.3 1404.7,428.6 1403.4,429.0C1402.0,429.3 1400.4,418.3 1399.4,420.4C1398.4,426.0 1397.9,461.6 1397.3,462.5C1396.6,463.4 1396.4,430.4 1395.4,425.9C1394.5,421.5 1392.8,434.0 1391.5,435.8C1390.1,437.6 1388.6,432.3 1387.5,436.8C1386.4,441.2 1385.7,461.8 1384.9,462.4C1384.0,463.0 1383.3,442.1 1382.2,440.6C1381.1,439.2 1379.6,452.2 1378.3,453.6C1376.9,455.0 1375.4,449.1 1374.3,449.2C1373.2,449.3 1372.5,451.6 1371.7,454.2C1370.8,456.7 1370.0,464.8 1369.0,464.4C1368.0,464.0 1366.7,451.8 1365.6,451.6C1364.5,451.4 1363.4,463.8 1362.4,463.1C1361.5,462.4 1360.9,447.7 1359.8,447.4C1358.7,447.2 1357.1,462.0 1355.8,461.5C1354.5,461.1 1353.0,450.1 1351.9,444.8C1350.8,439.5 1350.0,425.2 1349.2,429.8C1348.4,434.4 1347.8,468.5 1347.1,472.4C1346.4,476.3 1345.9,452.9 1345.3,453.3C1344.6,453.8 1344.1,479.0 1343.4,475.1C1342.7,471.2 1342.2,427.5 1341.3,429.7C1340.4,432.0 1339.4,473.6 1338.1,488.4C1336.9,503.1 1335.4,530.0 1333.9,518.3C1332.5,506.6 1330.6,435.0 1329.4,418.3C1328.2,418.3 1327.7,418.3 1326.8,418.3C1326.0,418.3 1325.1,418.3 1324.2,418.3C1323.4,418.3 1322.5,418.3 1321.7,418.3C1320.8,418.3 1319.9,418.3 1319.1,418.3C1318.2,418.3 1317.4,418.3 1316.5,418.3C1315.6,418.3 1314.8,418.3 1313.9,418.3C1313.1,418.3 1312.2,418.3 1311.3,418.3C1310.5,418.3 1309.6,418.3 1308.8,418.3C1307.9,418.3 1307.0,418.3 1306.2,418.3C1305.3,418.3 1304.5,418.3 1303.6,418.3C1302.7,418.3 1301.9,418.3 1301.0,418.3C1300.1,418.3 1299.3,418.3 1298.4,418.3C1297.6,418.3 1296.7,418.3 1295.8,418.3C1295.0,418.3 1294.1,418.3 1293.3,418.3C1292.4,418.3 1291.5,418.3 1290.7,418.3C1289.8,418.3 1289.0,418.3 1288.1,418.3C1287.2,418.3 1286.4,418.3 1285.5,418.3C1284.7,418.3 1283.8,418.3 1282.9,418.3C1282.1,418.3 1281.2,418.3 1280.4,418.3C1279.5,418.3 1278.6,418.3 1277.8,418.3C1276.9,418.3 1276.1,418.3 1275.2,418.3C1274.3,420.1 1273.6,424.5 1272.5,429.0C1271.4,433.6 1269.7,439.5 1268.6,445.6C1267.5,451.6 1266.8,457.4 1265.9,465.3C1265.1,473.2 1264.4,492.0 1263.3,492.7C1262.2,493.4 1260.4,475.3 1259.3,469.7C1258.2,464.1 1257.8,458.8 1256.7,459.3C1255.6,459.8 1254.1,475.8 1252.7,472.6C1251.4,469.4 1249.9,443.1 1248.8,440.0C1247.7,436.9 1247.0,456.7 1246.1,453.9C1245.3,451.0 1244.6,423.9 1243.5,422.8C1242.4,421.8 1240.9,441.6 1239.5,447.7C1238.2,453.7 1236.9,451.7 1235.6,459.4C1234.3,467.0 1232.8,490.2 1231.6,493.5C1230.4,496.8 1229.6,484.3 1228.5,479.2C1227.5,474.1 1226.5,466.7 1225.5,462.8C1224.4,458.9 1223.7,455.2 1222.4,455.7C1221.1,456.2 1218.9,470.1 1217.6,465.7C1216.3,461.3 1215.4,431.2 1214.5,429.4C1213.5,427.7 1212.7,445.3 1211.8,455.3C1210.9,465.4 1210.3,495.6 1209.2,489.8C1208.1,483.9 1206.3,432.3 1205.2,420.4C1204.1,418.3 1203.6,418.3 1202.6,418.3C1201.6,419.5 1200.4,423.2 1199.3,427.5C1198.2,431.9 1197.2,437.4 1196.0,444.3C1194.8,451.1 1193.1,466.6 1192.0,468.6C1190.9,470.7 1190.3,450.6 1189.4,456.5C1188.4,462.4 1187.2,499.1 1186.2,504.2C1185.2,509.3 1184.2,493.8 1183.2,487.1C1182.1,480.4 1181.3,467.0 1180.1,463.9C1179.0,460.8 1177.5,471.6 1176.2,468.5C1174.8,465.4 1173.7,441.8 1172.2,445.2C1170.7,448.7 1169.0,488.8 1167.4,489.3C1165.9,489.8 1164.3,445.3 1163.0,448.2C1161.6,451.1 1160.6,503.8 1159.5,506.5C1158.4,509.2 1157.3,472.4 1156.4,464.6C1155.4,456.8 1154.6,459.7 1153.7,459.7C1152.8,459.7 1152.0,463.5 1151.1,464.6C1150.2,465.6 1149.3,470.0 1148.4,466.0C1147.6,462.0 1146.8,438.9 1145.8,440.4C1144.8,441.9 1143.8,471.0 1142.6,475.0C1141.5,479.1 1140.2,469.1 1138.9,464.7C1137.7,460.3 1136.5,447.2 1135.2,448.9C1134.0,450.5 1132.6,467.7 1131.3,474.6C1130.0,481.6 1128.5,495.6 1127.3,490.7C1126.1,485.7 1125.2,445.3 1124.1,445.1C1123.1,444.8 1122.0,488.8 1121.2,489.0C1120.4,489.1 1120.4,445.8 1119.4,445.9C1118.4,446.0 1116.7,490.8 1115.4,489.4C1114.1,488.1 1112.6,439.7 1111.5,437.8C1110.4,435.9 1109.7,477.6 1108.8,478.1C1107.9,478.5 1107.2,435.6 1106.2,440.5C1105.2,445.3 1104.1,510.2 1103.0,507.3C1101.9,504.4 1100.6,428.8 1099.6,423.1C1098.6,418.3 1097.6,473.7 1096.9,473.3C1096.3,472.8 1096.3,424.5 1095.6,420.4C1095.0,418.3 1094.1,439.5 1093.0,448.5C1091.9,457.6 1090.1,473.9 1089.0,474.8C1087.9,475.8 1087.3,459.8 1086.4,454.3C1085.5,448.8 1084.8,432.4 1083.7,441.8C1082.7,451.1 1081.5,505.5 1080.3,510.5C1079.1,515.4 1077.9,482.6 1076.7,471.4C1075.6,460.1 1074.4,445.2 1073.2,443.0C1071.9,440.8 1070.3,457.0 1069.2,458.1C1068.1,459.1 1067.5,451.0 1066.6,449.3C1065.7,447.6 1065.2,436.9 1063.9,447.8C1062.7,458.8 1060.5,509.5 1059.2,514.8C1057.9,520.1 1057.2,490.0 1056.3,479.5C1055.3,469.1 1054.3,455.5 1053.4,452.1C1052.5,448.7 1051.6,455.2 1050.7,459.1C1049.9,463.1 1049.0,473.8 1048.1,475.8C1047.2,477.7 1046.3,471.2 1045.5,470.7C1044.6,470.3 1043.8,471.1 1042.8,473.1C1041.8,475.1 1040.6,490.8 1039.6,482.7C1038.7,474.7 1037.9,424.3 1037.0,424.9C1036.1,425.5 1035.4,484.6 1034.4,486.3C1033.4,487.9 1032.2,432.9 1030.9,434.8C1029.6,436.8 1028.0,495.1 1026.4,497.7C1024.9,500.3 1023.1,454.7 1021.7,450.5C1020.2,446.2 1018.8,472.2 1017.7,472.3C1016.6,472.4 1016.2,449.8 1015.1,450.9C1014.0,452.1 1012.1,477.7 1011.1,479.2C1010.1,480.8 1009.7,461.2 1009.0,460.3C1008.4,459.4 1007.9,480.7 1007.2,473.7C1006.4,466.7 1005.0,427.5 1004.5,418.3Z" fill="#d98b2b" stroke="#fff" stroke-opacity="0.5" stroke-width="0.8"/><line x1="35" y1="649.5" x2="1820" y2="649.5" stroke="#fff" stroke-width="1"/><path d="M39.4,649.5L39.4,649.5L41.7,635.4L44.1,628.4L45.4,625.3L46.8,624.5L48.1,621.8L49.5,620.2L50.8,615.7L52.1,614.2L53.5,611.9L55.8,619.0L57.2,618.3L58.5,620.3L59.8,621.0L61.2,619.2L62.5,618.9L63.9,619.7L65.2,621.3L66.5,620.4L67.8,620.6L69.1,621.1L70.4,623.1L71.7,622.3L73.0,623.1L74.3,624.5L75.6,624.7L76.9,623.2L78.3,624.2L79.6,624.5L81.0,623.2L82.3,622.5L83.7,624.6L85.0,623.0L86.3,624.9L88.1,626.0L89.9,630.7L91.2,629.3L92.6,631.6L94.0,632.3L95.3,632.5L96.7,632.8L98.1,631.9L100.4,629.6L101.6,613.1L102.7,622.2L103.9,625.2L105.1,626.0L106.6,624.4L108.1,622.2L109.5,621.3L111.0,621.3L112.6,624.1L114.1,626.3L115.7,629.5L117.0,628.6L118.3,631.3L119.6,629.4L121.0,628.7L122.3,629.3L123.6,629.5L124.9,630.7L126.2,630.7L127.6,630.7L129.0,627.3L130.4,627.8L131.7,624.9L133.1,623.2L134.5,623.7L135.9,624.9L137.4,625.8L138.9,624.7L140.3,627.2L141.6,625.5L142.9,626.6L144.2,625.8L145.5,624.8L146.8,621.2L148.2,620.6L149.5,622.1L150.8,618.7L152.1,619.0L153.4,618.1L154.7,620.1L156.1,622.0L157.4,622.2L158.8,624.5L160.1,625.8L161.5,624.9L162.8,623.3L164.1,624.6L165.5,625.3L166.8,624.0L168.2,625.9L169.5,624.5L170.8,626.0L172.1,625.0L173.5,627.3L174.8,627.3L176.1,627.3L177.4,627.6L178.7,626.5L180.0,627.8L181.3,627.4L182.6,627.2L183.9,627.5L185.2,623.6L186.5,624.6L187.7,623.1L189.0,621.6L190.3,619.4L191.6,620.1L192.9,617.2L194.2,617.7L195.5,616.6L197.3,620.6L199.0,624.9L200.3,624.7L201.5,626.4L202.8,624.8L204.0,625.7L205.3,626.2L206.5,623.3L207.8,625.5L209.0,624.3L210.3,623.3L211.5,623.9L212.8,624.6L214.0,623.8L215.3,623.6L216.5,622.7L217.8,623.7L219.1,626.1L220.4,625.5L221.7,627.7L223.0,628.7L224.3,627.9L225.6,629.9L226.9,630.8L228.2,631.1L229.5,633.1L230.8,631.3L232.1,632.8L233.4,631.9L234.7,632.0L236.1,631.7L237.4,630.8L238.7,631.4L240.0,630.9L241.3,630.7L243.6,616.6L244.9,617.2L246.2,616.1L247.5,617.5L248.8,617.4L250.1,617.7L251.4,620.6L252.7,620.1L254.0,619.2L255.4,621.3L256.8,621.3L258.2,625.0L259.6,626.2L261.0,626.2L262.4,627.2L264.0,626.4L265.5,623.4L267.1,620.2L268.7,624.4L270.2,625.0L271.8,628.4L273.3,624.2L274.9,620.7L276.5,619.0L278.0,624.1L279.6,626.0L281.2,630.7L282.5,628.5L283.9,628.7L285.2,624.3L286.5,622.3L287.9,623.3L289.2,619.0L290.6,619.0L292.0,619.6L293.4,619.5L294.8,617.9L296.2,618.7L297.6,620.2L299.2,624.1L300.7,625.9L302.3,628.4L303.5,628.2L304.8,628.7L306.0,629.1L307.2,628.6L308.4,627.0L309.7,629.4L310.9,627.4L312.1,627.7L313.4,629.1L314.6,627.9L315.8,626.7L317.1,627.0L318.3,628.5L319.5,625.1L320.7,625.7L322.0,624.9L323.2,627.9L324.4,627.2L325.7,627.9L326.9,625.1L328.1,626.0L329.5,627.3L330.9,628.3L332.3,627.7L333.8,626.4L335.2,628.4L336.7,624.5L338.3,623.8L339.9,620.2L341.3,621.4L342.8,618.6L344.3,619.9L345.7,620.2L347.0,620.3L348.3,623.3L349.6,624.2L350.9,622.8L352.2,624.5L353.5,626.6L354.8,624.3L356.1,626.2L357.3,626.5L358.6,628.4L359.9,629.9L361.1,627.2L362.3,630.1L363.6,627.3L364.8,628.8L366.1,629.3L367.3,628.6L368.5,627.3L369.8,629.8L371.0,630.3L372.2,629.0L373.5,630.1L374.7,630.6L375.9,630.5L377.2,630.9L378.4,630.4L379.6,630.1L380.9,630.2L382.1,629.5L383.9,627.4L385.6,627.2L386.8,609.6L389.2,626.0L390.4,626.4L391.7,625.3L392.9,626.1L394.2,625.1L395.5,626.0L396.7,624.8L398.0,625.2L399.3,622.3L400.5,622.6L401.8,623.5L403.1,622.1L404.3,620.1L405.6,621.3L406.9,623.4L408.1,621.5L409.4,623.5L410.7,623.9L412.0,623.3L413.3,625.6L414.5,625.8L415.8,625.8L417.1,625.4L418.4,628.3L419.7,628.4L422.0,623.4L423.2,587.3L425.0,606.2L426.3,607.7L427.7,610.8L429.1,614.3L430.6,615.4L432.2,617.8L433.8,619.0L435.5,617.7L437.3,615.3L438.5,588.5L439.9,608.2L441.5,614.0L443.1,616.6L444.5,617.6L446.0,617.5L447.4,614.8L448.8,616.2L450.2,614.9L451.4,602.6L453.1,617.3L454.5,620.7L455.9,623.1L457.2,623.7L458.7,621.3L460.2,620.0L461.6,619.5L463.1,619.0L464.6,622.1L466.0,624.6L467.5,626.8L469.0,628.4L470.2,629.4L471.4,631.3L472.6,631.2L473.8,632.7L475.0,632.7L476.5,630.4L478.0,629.6L479.5,630.5L481.0,630.0L482.2,609.9L483.3,620.8L484.5,624.1L485.8,625.5L488.2,618.3L490.0,621.4L491.8,627.9L493.1,628.9L494.5,629.0L495.8,630.5L497.1,629.4L498.5,629.3L499.8,629.5L501.1,630.8L502.5,630.0L503.8,630.3L505.1,631.2L506.4,629.4L507.7,629.2L509.0,627.2L510.3,627.6L511.7,626.8L513.0,624.9L514.3,624.3L515.6,622.1L516.9,621.5L518.2,620.7L519.8,622.2L521.4,624.9L523.0,627.9L524.5,626.7L526.0,625.7L527.5,627.1L529.0,626.3L530.2,614.7L531.3,622.3L532.5,624.5L533.8,625.5L535.7,623.8L536.9,611.1L538.1,619.5L539.6,619.6L541.0,623.1L542.5,622.6L544.0,618.7L545.5,617.2L547.0,615.9L548.4,619.1L549.7,617.8L551.1,619.1L552.5,621.6L553.9,622.8L555.2,624.0L556.6,626.7L558.0,627.3L559.3,625.2L560.7,624.6L562.1,622.8L563.5,622.2L564.8,621.4L566.2,621.9L568.0,620.8L569.8,620.3L571.0,608.7L573.4,627.9L574.8,624.6L576.3,624.2L577.5,596.7L578.4,616.9L580.6,625.5L583.0,608.7L584.4,610.0L585.9,611.8L587.3,615.4L588.8,618.1L590.2,618.3L591.6,618.9L593.1,617.4L594.5,617.6L596.0,614.2L597.4,614.7L598.7,615.7L600.1,616.6L601.4,617.8L602.7,618.9L604.1,620.7L605.4,623.7L606.7,622.0L608.1,623.4L609.4,625.5L611.8,620.3L613.0,582.3L614.1,609.2L615.3,614.9L616.6,620.7L619.0,620.7L620.6,620.1L622.2,619.2L623.8,619.3L625.0,608.7L626.1,618.8L627.3,622.5L628.6,623.1L630.3,620.2L631.5,599.1L632.8,612.5L634.3,614.6L635.8,618.3L637.2,618.2L638.7,617.9L640.1,616.3L641.5,613.6L643.0,613.5L644.3,615.9L645.7,615.3L647.0,615.8L648.3,618.9L649.7,620.6L651.0,621.6L652.3,622.2L653.7,623.2L655.0,625.5L656.3,625.6L657.7,626.1L659.0,628.6L660.3,628.9L661.7,629.1L663.0,627.8L664.3,629.9L665.7,629.5L667.0,630.3L668.4,630.6L669.9,629.0L671.3,626.8L672.7,623.9L674.2,623.1L675.6,623.4L677.1,624.4L678.5,626.7L679.9,626.9L681.4,627.9L682.7,628.4L684.0,628.7L685.3,630.3L686.6,627.8L687.9,630.6L689.2,628.1L690.5,628.6L691.9,632.3L693.2,631.0L694.5,630.0L695.8,631.5L697.2,629.3L698.5,630.7L699.9,630.8L701.3,630.5L702.6,627.3L704.0,629.5L705.4,627.9L706.7,627.4L708.0,628.8L709.3,627.2L710.7,625.4L712.0,628.1L713.3,625.5L714.6,626.4L715.9,624.8L717.3,625.2L718.6,625.7L719.8,609.9L721.2,619.1L722.9,622.1L724.6,623.1L725.9,621.3L727.2,622.5L728.5,623.8L729.8,623.6L731.1,621.5L732.4,621.3L733.7,621.5L735.1,621.8L736.4,620.7L737.7,620.5L739.0,619.5L740.3,618.5L741.5,621.8L742.8,619.3L744.1,619.2L745.4,622.1L746.7,619.4L747.9,620.4L749.2,620.0L750.5,622.4L751.8,622.4L753.1,622.5L754.3,620.6L755.6,622.3L756.9,623.4L758.2,623.1L760.6,621.5L761.8,609.9L762.9,620.8L764.1,623.4L765.4,625.5L766.7,625.7L768.0,625.9L769.3,625.1L770.6,621.9L771.9,622.5L773.1,600.3L774.4,612.9L775.9,616.4L777.4,618.3L778.8,616.5L780.3,618.7L781.7,618.4L783.1,617.3L784.6,617.1L785.9,618.5L787.2,618.1L788.6,616.3L789.9,616.8L791.2,617.3L792.6,618.2L793.9,617.5L795.2,617.6L796.6,619.5L798.2,624.1L799.8,628.3L801.4,633.9L802.7,635.2L804.0,632.5L805.3,633.2L806.7,631.8L808.0,631.9L809.3,632.9L810.6,633.4L811.9,629.9L813.3,632.5L814.6,630.9L815.8,608.7L817.2,618.8L818.9,621.0L820.6,623.1L823.0,613.5L824.3,614.6L825.6,615.3L826.9,614.3L828.2,614.0L829.5,617.1L830.8,616.2L832.1,618.0L833.4,617.7L834.8,618.8L836.1,620.2L837.4,619.5L838.8,620.1L840.2,619.4L841.6,616.2L843.0,617.1L844.4,617.5L845.8,615.9L847.1,616.0L848.4,617.2L849.7,620.7L851.0,623.3L852.3,624.6L853.6,626.5L854.9,627.2L856.2,629.6L857.6,630.6L858.9,632.0L860.2,632.7L862.6,630.0L863.8,609.9L865.2,619.1L866.9,620.9L868.6,623.1L869.9,621.2L871.3,621.3L872.7,622.0L874.1,621.2L875.3,607.5L876.5,619.3L877.9,622.1L879.4,624.3L881.2,626.0L883.0,627.9L884.3,628.3L885.7,628.5L887.1,629.5L888.5,628.7L889.8,626.2L891.2,629.2L892.6,627.9L893.8,626.9L895.1,625.5L896.4,623.7L897.7,625.1L899.0,623.9L900.2,623.0L901.5,621.5L902.8,620.4L904.1,617.6L905.4,617.0L906.6,616.0L907.9,618.1L909.2,617.1L910.5,613.7L911.8,613.5L913.4,615.3L915.0,620.0L916.6,623.1L918.0,622.5L919.4,624.4L920.9,622.8L922.3,620.6L923.8,621.9L925.7,649.5L925.7,649.5L923.8,676.3L922.2,680.4L920.6,681.4L919.0,684.7L916.6,681.1L915.0,683.6L913.4,685.2L911.8,687.1L910.2,680.1L908.6,676.9L907.0,670.3L905.6,669.6L904.2,672.8L902.9,672.5L901.5,673.9L900.1,671.7L898.7,672.2L897.4,673.9L896.0,671.6L894.6,671.9L893.3,671.9L891.9,670.3L890.5,669.4L889.1,671.3L887.8,669.1L886.3,669.8L884.9,669.3L883.4,672.4L882.0,671.2L880.6,672.7L879.3,676.2L878.1,675.6L876.9,678.8L875.3,693.1L874.1,680.4L872.7,680.9L871.3,679.0L869.9,677.6L868.6,678.7L866.9,682.1L865.2,682.3L863.8,690.7L861.4,665.5L859.0,670.3L857.4,670.5L855.8,667.5L854.2,667.9L852.6,670.6L851.0,672.0L849.4,671.5L847.8,672.3L846.2,674.8L844.6,673.9L842.9,674.4L841.2,677.1L839.8,684.7L838.6,674.1L836.8,674.6L835.0,672.7L833.5,674.3L832.1,675.9L830.7,676.2L829.2,674.3L827.8,676.3L826.3,679.8L824.9,679.7L823.5,682.1L822.0,682.4L820.6,685.9L819.0,687.9L817.4,690.9L815.8,691.9L813.4,670.3L811.8,671.9L810.2,670.4L808.6,672.7L807.1,671.5L805.7,667.7L804.3,667.7L802.8,665.8L801.4,664.3L799.9,667.0L798.4,672.5L796.9,675.6L795.4,681.1L793.6,675.5L791.8,672.7L790.3,673.8L788.9,674.0L787.5,676.2L786.0,678.5L784.6,678.7L783.1,680.4L781.7,679.2L780.3,680.8L778.8,682.0L777.4,682.3L775.9,683.1L774.4,687.3L773.1,699.1L771.9,678.0L770.2,675.1L768.4,673.7L766.6,672.7L764.9,674.1L763.2,675.9L761.8,683.5L760.6,672.9L758.2,671.5L756.7,672.8L755.3,672.7L753.9,674.0L752.4,674.1L751.0,675.1L749.6,674.4L748.2,675.6L746.8,675.3L745.4,675.5L744.0,673.7L742.6,675.1L740.8,679.9L739.0,682.3L736.6,676.3L735.1,674.9L733.7,677.7L732.3,677.3L730.8,675.6L729.4,677.5L727.8,679.3L726.2,679.1L724.6,678.7L722.9,679.6L721.2,682.3L719.8,690.7L718.6,675.9L716.8,673.6L715.0,673.9L713.5,674.0L712.1,674.9L710.7,675.0L709.2,674.8L707.8,676.3L706.2,673.6L704.6,674.3L703.0,671.5L701.5,672.3L700.1,670.2L698.7,669.1L697.2,670.6L695.8,669.1L694.4,668.0L693.1,670.5L691.8,669.9L690.4,671.1L689.1,669.4L687.8,671.4L686.4,668.4L685.1,670.1L683.8,670.3L682.3,673.2L680.9,674.3L679.5,672.6L678.0,674.0L676.6,676.3L675.0,678.4L673.4,678.2L671.8,677.5L669.4,670.3L667.8,669.9L666.2,668.1L664.6,669.1L663.1,672.1L661.7,672.1L660.3,672.6L658.8,673.6L657.4,676.3L656.0,676.3L654.6,675.8L653.3,676.7L651.9,674.8L650.5,677.8L649.2,676.8L647.8,676.3L646.2,678.9L644.6,679.4L643.0,683.5L641.4,681.1L639.8,681.0L638.2,679.9L636.6,682.5L635.1,682.0L633.5,683.5L631.5,691.9L630.3,680.3L628.6,678.7L627.3,681.8L626.1,682.7L625.0,691.9L623.8,680.3L621.4,678.7L619.6,679.0L617.8,679.9L616.3,684.2L614.8,685.7L613.5,699.1L611.1,673.9L609.4,683.5L607.6,678.1L605.8,676.3L604.3,677.3L602.8,681.3L601.3,681.5L599.8,684.7L598.2,682.6L596.6,683.3L595.0,679.9L593.2,683.6L591.4,684.7L589.6,682.0L587.8,679.9L586.0,682.4L584.2,685.9L582.4,681.3L580.6,676.3L578.4,684.6L577.5,703.9L576.3,675.4L574.8,672.8L573.4,671.5L571.6,677.9L569.8,681.1L568.0,676.2L566.2,672.7L563.8,678.7L562.2,675.9L560.6,674.4L559.0,672.7L557.4,674.6L555.8,673.9L554.2,676.3L552.6,677.2L551.0,681.6L549.4,683.5L547.8,681.7L546.2,679.1L544.6,677.5L542.8,676.7L541.0,678.7L539.6,678.8L538.1,681.9L536.9,689.5L535.7,677.9L533.8,676.3L531.4,683.5L529.8,680.9L528.2,679.0L526.6,675.1L524.8,674.6L523.0,676.3L521.4,676.8L519.8,677.6L518.2,679.9L516.8,678.9L515.3,675.9L513.9,673.1L512.4,672.1L511.0,671.5L509.6,671.6L508.1,670.9L506.7,669.2L505.2,668.5L503.8,669.1L501.4,672.7L499.6,669.6L497.8,669.1L496.2,669.4L494.6,669.7L493.0,671.5L491.4,675.5L489.8,679.1L488.2,682.3L487.0,676.3L485.3,677.0L483.6,680.6L482.2,690.7L481.0,670.6L478.6,667.9L476.8,670.7L475.0,670.3L473.8,670.8L472.6,668.5L471.4,668.7L470.2,669.7L469.0,667.9L467.6,668.4L466.2,671.3L464.7,671.0L463.3,673.3L461.9,672.6L460.5,672.2L459.1,672.6L457.7,673.9L456.3,673.7L454.9,676.1L453.7,679.3L452.4,679.6L451.4,687.8L450.2,677.5L447.8,676.1L446.3,678.5L444.7,679.6L443.1,679.6L441.7,682.2L440.4,684.9L439.2,697.2L438.0,678.6L436.1,676.1L433.8,679.6L432.3,679.6L430.9,684.2L429.5,684.4L428.1,686.4L426.7,686.7L424.6,693.0L423.7,707.8L422.5,672.7L420.8,667.9L419.7,673.7L418.1,672.8L416.5,673.8L415.0,673.7L413.6,676.2L412.2,674.8L410.8,675.2L409.3,676.8L407.9,677.3L406.5,677.9L405.1,674.6L403.7,674.2L402.3,673.5L400.9,673.7L399.6,672.5L398.3,674.3L396.9,672.9L395.6,673.4L394.3,672.3L393.0,674.1L391.6,671.4L390.3,672.6L389.1,675.3L387.9,676.8L386.8,686.7L385.6,671.2L383.9,671.4L382.1,669.1L380.5,669.9L379.0,669.7L377.4,669.1L376.1,669.7L374.7,669.1L373.4,668.6L372.1,669.5L370.7,670.6L369.4,670.1L368.0,670.2L366.7,669.0L365.5,669.2L364.2,670.0L362.9,672.8L361.6,672.7L360.3,673.2L359.1,671.1L357.8,672.1L356.5,670.5L355.2,670.8L353.9,672.6L352.6,672.0L351.3,674.2L349.9,672.5L348.6,672.4L347.2,675.3L345.9,674.1L344.6,674.9L343.0,675.8L341.4,677.4L339.9,679.6L337.5,671.4L336.2,671.8L334.8,672.4L333.5,672.6L332.1,672.3L330.8,672.5L329.5,670.3L328.1,671.4L326.7,672.5L325.3,670.4L323.9,669.7L322.5,668.6L321.1,669.1L319.7,668.8L318.4,671.0L317.1,671.2L315.7,669.6L314.4,668.9L313.0,668.3L311.7,670.2L310.3,672.0L309.0,671.0L307.7,672.2L306.3,671.8L305.0,669.3L303.6,670.4L302.3,671.4L300.9,672.1L299.5,675.0L298.1,674.8L296.7,677.5L295.3,678.4L293.7,680.9L292.1,679.2L290.6,680.8L288.2,665.5L286.8,665.7L285.4,668.4L284.0,668.5L282.6,667.5L281.2,669.1L279.6,674.1L278.0,674.5L276.5,679.6L274.1,674.9L272.6,674.0L271.0,674.8L269.4,677.3L267.9,677.4L266.3,676.8L264.7,674.9L263.3,674.6L261.9,673.2L260.5,676.4L259.1,674.4L257.7,674.9L256.4,674.0L255.0,676.8L253.7,675.0L252.3,675.5L251.0,674.1L249.7,675.7L248.3,676.1L246.7,679.6L245.2,681.9L243.6,683.1L241.9,675.6L240.1,669.1L238.6,668.0L237.2,670.7L235.7,667.7L234.2,669.1L232.7,669.5L231.1,666.2L229.5,665.5L228.0,666.3L226.4,666.9L224.8,670.2L223.4,670.0L222.0,671.5L220.6,672.6L219.2,673.5L217.8,674.9L216.4,675.3L215.0,672.8L213.6,675.1L212.2,675.6L210.8,673.7L209.4,672.7L208.1,673.4L206.8,675.7L205.5,676.1L204.2,675.2L202.9,675.9L201.6,676.1L200.3,674.4L199.0,674.9L197.3,676.9L195.5,682.0L193.7,674.5L192.0,670.2L190.6,669.1L189.3,672.3L187.9,669.7L186.6,670.5L185.3,669.8L183.9,672.8L182.6,671.4L181.3,672.3L180.0,671.6L178.7,671.2L177.4,671.3L176.1,672.7L174.8,674.6L173.5,672.5L172.1,674.4L170.8,673.7L169.6,672.7L168.3,672.8L167.0,674.9L165.7,673.1L164.4,675.4L163.1,672.7L161.8,673.8L160.5,674.6L159.2,674.8L157.9,673.7L156.2,675.6L154.4,679.6L152.8,680.7L151.3,680.1L149.7,680.8L148.4,679.2L147.0,677.1L145.7,676.8L144.4,678.3L143.0,676.4L141.7,673.9L140.3,673.7L138.6,675.2L136.8,677.3L135.0,675.0L133.3,671.4L131.9,670.9L130.5,668.7L129.1,669.3L127.7,670.3L126.2,669.1L124.8,671.4L123.4,669.6L122.0,670.2L120.6,671.8L119.2,672.6L117.4,672.8L115.7,670.2L114.2,672.5L112.7,675.4L111.3,675.4L109.8,677.3L108.2,675.4L106.7,673.2L105.1,673.7L103.9,676.0L102.7,677.6L101.6,686.7L100.4,670.1L98.1,667.9L96.7,667.1L95.4,667.8L94.1,668.7L92.7,668.6L91.4,667.2L90.0,667.5L88.7,669.1L87.1,672.1L85.6,674.2L84.0,676.1L82.6,675.2L81.2,674.8L79.8,675.4L78.4,676.6L76.9,676.1L75.6,677.7L74.3,675.4L73.0,677.5L71.7,675.0L70.4,676.9L69.1,676.7L67.8,678.0L66.5,677.7L65.2,677.3L63.9,678.4L62.5,679.5L61.2,678.9L59.8,678.7L58.5,677.7L57.2,677.9L55.8,679.6L53.5,686.7L51.9,681.8L50.3,680.5L48.8,674.9L47.2,674.6L45.6,673.0L44.1,670.2L41.7,663.2L39.4,649.5Z" fill="#26988b" stroke="#fff" stroke-opacity="0.45" stroke-width="0.7"/><clipPath id="cb2"><rect x="926" y="535" width="894" height="229"/></clipPath><g clip-path="url(#cb2)"><path transform="translate(894,0)" d="M39.4,649.5L39.4,649.5L41.7,635.4L44.1,628.4L45.4,625.3L46.8,624.5L48.1,621.8L49.5,620.2L50.8,615.7L52.1,614.2L53.5,611.9L55.8,619.0L57.2,618.3L58.5,620.3L59.8,621.0L61.2,619.2L62.5,618.9L63.9,619.7L65.2,621.3L66.5,620.4L67.8,620.6L69.1,621.1L70.4,623.1L71.7,622.3L73.0,623.1L74.3,624.5L75.6,624.7L76.9,623.2L78.3,624.2L79.6,624.5L81.0,623.2L82.3,622.5L83.7,624.6L85.0,623.0L86.3,624.9L88.1,626.0L89.9,630.7L91.2,629.3L92.6,631.6L94.0,632.3L95.3,632.5L96.7,632.8L98.1,631.9L100.4,629.6L101.6,613.1L102.7,622.2L103.9,625.2L105.1,626.0L106.6,624.4L108.1,622.2L109.5,621.3L111.0,621.3L112.6,624.1L114.1,626.3L115.7,629.5L117.0,628.6L118.3,631.3L119.6,629.4L121.0,628.7L122.3,629.3L123.6,629.5L124.9,630.7L126.2,630.7L127.6,630.7L129.0,627.3L130.4,627.8L131.7,624.9L133.1,623.2L134.5,623.7L135.9,624.9L137.4,625.8L138.9,624.7L140.3,627.2L141.6,625.5L142.9,626.6L144.2,625.8L145.5,624.8L146.8,621.2L148.2,620.6L149.5,622.1L150.8,618.7L152.1,619.0L153.4,618.1L154.7,620.1L156.1,622.0L157.4,622.2L158.8,624.5L160.1,625.8L161.5,624.9L162.8,623.3L164.1,624.6L165.5,625.3L166.8,624.0L168.2,625.9L169.5,624.5L170.8,626.0L172.1,625.0L173.5,627.3L174.8,627.3L176.1,627.3L177.4,627.6L178.7,626.5L180.0,627.8L181.3,627.4L182.6,627.2L183.9,627.5L185.2,623.6L186.5,624.6L187.7,623.1L189.0,621.6L190.3,619.4L191.6,620.1L192.9,617.2L194.2,617.7L195.5,616.6L197.3,620.6L199.0,624.9L200.3,624.7L201.5,626.4L202.8,624.8L204.0,625.7L205.3,626.2L206.5,623.3L207.8,625.5L209.0,624.3L210.3,623.3L211.5,623.9L212.8,624.6L214.0,623.8L215.3,623.6L216.5,622.7L217.8,623.7L219.1,626.1L220.4,625.5L221.7,627.7L223.0,628.7L224.3,627.9L225.6,629.9L226.9,630.8L228.2,631.1L229.5,633.1L230.8,631.3L232.1,632.8L233.4,631.9L234.7,632.0L236.1,631.7L237.4,630.8L238.7,631.4L240.0,630.9L241.3,630.7L243.6,616.6L244.9,617.2L246.2,616.1L247.5,617.5L248.8,617.4L250.1,617.7L251.4,620.6L252.7,620.1L254.0,619.2L255.4,621.3L256.8,621.3L258.2,625.0L259.6,626.2L261.0,626.2L262.4,627.2L264.0,626.4L265.5,623.4L267.1,620.2L268.7,624.4L270.2,625.0L271.8,628.4L273.3,624.2L274.9,620.7L276.5,619.0L278.0,624.1L279.6,626.0L281.2,630.7L282.5,628.5L283.9,628.7L285.2,624.3L286.5,622.3L287.9,623.3L289.2,619.0L290.6,619.0L292.0,619.6L293.4,619.5L294.8,617.9L296.2,618.7L297.6,620.2L299.2,624.1L300.7,625.9L302.3,628.4L303.5,628.2L304.8,628.7L306.0,629.1L307.2,628.6L308.4,627.0L309.7,629.4L310.9,627.4L312.1,627.7L313.4,629.1L314.6,627.9L315.8,626.7L317.1,627.0L318.3,628.5L319.5,625.1L320.7,625.7L322.0,624.9L323.2,627.9L324.4,627.2L325.7,627.9L326.9,625.1L328.1,626.0L329.5,627.3L330.9,628.3L332.3,627.7L333.8,626.4L335.2,628.4L336.7,624.5L338.3,623.8L339.9,620.2L341.3,621.4L342.8,618.6L344.3,619.9L345.7,620.2L347.0,620.3L348.3,623.3L349.6,624.2L350.9,622.8L352.2,624.5L353.5,626.6L354.8,624.3L356.1,626.2L357.3,626.5L358.6,628.4L359.9,629.9L361.1,627.2L362.3,630.1L363.6,627.3L364.8,628.8L366.1,629.3L367.3,628.6L368.5,627.3L369.8,629.8L371.0,630.3L372.2,629.0L373.5,630.1L374.7,630.6L375.9,630.5L377.2,630.9L378.4,630.4L379.6,630.1L380.9,630.2L382.1,629.5L383.9,627.4L385.6,627.2L386.8,609.6L389.2,626.0L390.4,626.4L391.7,625.3L392.9,626.1L394.2,625.1L395.5,626.0L396.7,624.8L398.0,625.2L399.3,622.3L400.5,622.6L401.8,623.5L403.1,622.1L404.3,620.1L405.6,621.3L406.9,623.4L408.1,621.5L409.4,623.5L410.7,623.9L412.0,623.3L413.3,625.6L414.5,625.8L415.8,625.8L417.1,625.4L418.4,628.3L419.7,628.4L422.0,623.4L423.2,587.3L425.0,606.2L426.3,607.7L427.7,610.8L429.1,614.3L430.6,615.4L432.2,617.8L433.8,619.0L435.5,617.7L437.3,615.3L438.5,588.5L439.9,608.2L441.5,614.0L443.1,616.6L444.5,617.6L446.0,617.5L447.4,614.8L448.8,616.2L450.2,614.9L451.4,602.6L453.1,617.3L454.5,620.7L455.9,623.1L457.2,623.7L458.7,621.3L460.2,620.0L461.6,619.5L463.1,619.0L464.6,622.1L466.0,624.6L467.5,626.8L469.0,628.4L470.2,629.4L471.4,631.3L472.6,631.2L473.8,632.7L475.0,632.7L476.5,630.4L478.0,629.6L479.5,630.5L481.0,630.0L482.2,609.9L483.3,620.8L484.5,624.1L485.8,625.5L488.2,618.3L490.0,621.4L491.8,627.9L493.1,628.9L494.5,629.0L495.8,630.5L497.1,629.4L498.5,629.3L499.8,629.5L501.1,630.8L502.5,630.0L503.8,630.3L505.1,631.2L506.4,629.4L507.7,629.2L509.0,627.2L510.3,627.6L511.7,626.8L513.0,624.9L514.3,624.3L515.6,622.1L516.9,621.5L518.2,620.7L519.8,622.2L521.4,624.9L523.0,627.9L524.5,626.7L526.0,625.7L527.5,627.1L529.0,626.3L530.2,614.7L531.3,622.3L532.5,624.5L533.8,625.5L535.7,623.8L536.9,611.1L538.1,619.5L539.6,619.6L541.0,623.1L542.5,622.6L544.0,618.7L545.5,617.2L547.0,615.9L548.4,619.1L549.7,617.8L551.1,619.1L552.5,621.6L553.9,622.8L555.2,624.0L556.6,626.7L558.0,627.3L559.3,625.2L560.7,624.6L562.1,622.8L563.5,622.2L564.8,621.4L566.2,621.9L568.0,620.8L569.8,620.3L571.0,608.7L573.4,627.9L574.8,624.6L576.3,624.2L577.5,596.7L578.4,616.9L580.6,625.5L583.0,608.7L584.4,610.0L585.9,611.8L587.3,615.4L588.8,618.1L590.2,618.3L591.6,618.9L593.1,617.4L594.5,617.6L596.0,614.2L597.4,614.7L598.7,615.7L600.1,616.6L601.4,617.8L602.7,618.9L604.1,620.7L605.4,623.7L606.7,622.0L608.1,623.4L609.4,625.5L611.8,620.3L613.0,582.3L614.1,609.2L615.3,614.9L616.6,620.7L619.0,620.7L620.6,620.1L622.2,619.2L623.8,619.3L625.0,608.7L626.1,618.8L627.3,622.5L628.6,623.1L630.3,620.2L631.5,599.1L632.8,612.5L634.3,614.6L635.8,618.3L637.2,618.2L638.7,617.9L640.1,616.3L641.5,613.6L643.0,613.5L644.3,615.9L645.7,615.3L647.0,615.8L648.3,618.9L649.7,620.6L651.0,621.6L652.3,622.2L653.7,623.2L655.0,625.5L656.3,625.6L657.7,626.1L659.0,628.6L660.3,628.9L661.7,629.1L663.0,627.8L664.3,629.9L665.7,629.5L667.0,630.3L668.4,630.6L669.9,629.0L671.3,626.8L672.7,623.9L674.2,623.1L675.6,623.4L677.1,624.4L678.5,626.7L679.9,626.9L681.4,627.9L682.7,628.4L684.0,628.7L685.3,630.3L686.6,627.8L687.9,630.6L689.2,628.1L690.5,628.6L691.9,632.3L693.2,631.0L694.5,630.0L695.8,631.5L697.2,629.3L698.5,630.7L699.9,630.8L701.3,630.5L702.6,627.3L704.0,629.5L705.4,627.9L706.7,627.4L708.0,628.8L709.3,627.2L710.7,625.4L712.0,628.1L713.3,625.5L714.6,626.4L715.9,624.8L717.3,625.2L718.6,625.7L719.8,609.9L721.2,619.1L722.9,622.1L724.6,623.1L725.9,621.3L727.2,622.5L728.5,623.8L729.8,623.6L731.1,621.5L732.4,621.3L733.7,621.5L735.1,621.8L736.4,620.7L737.7,620.5L739.0,619.5L740.3,618.5L741.5,621.8L742.8,619.3L744.1,619.2L745.4,622.1L746.7,619.4L747.9,620.4L749.2,620.0L750.5,622.4L751.8,622.4L753.1,622.5L754.3,620.6L755.6,622.3L756.9,623.4L758.2,623.1L760.6,621.5L761.8,609.9L762.9,620.8L764.1,623.4L765.4,625.5L766.7,625.7L768.0,625.9L769.3,625.1L770.6,621.9L771.9,622.5L773.1,600.3L774.4,612.9L775.9,616.4L777.4,618.3L778.8,616.5L780.3,618.7L781.7,618.4L783.1,617.3L784.6,617.1L785.9,618.5L787.2,618.1L788.6,616.3L789.9,616.8L791.2,617.3L792.6,618.2L793.9,617.5L795.2,617.6L796.6,619.5L798.2,624.1L799.8,628.3L801.4,633.9L802.7,635.2L804.0,632.5L805.3,633.2L806.7,631.8L808.0,631.9L809.3,632.9L810.6,633.4L811.9,629.9L813.3,632.5L814.6,630.9L815.8,608.7L817.2,618.8L818.9,621.0L820.6,623.1L823.0,613.5L824.3,614.6L825.6,615.3L826.9,614.3L828.2,614.0L829.5,617.1L830.8,616.2L832.1,618.0L833.4,617.7L834.8,618.8L836.1,620.2L837.4,619.5L838.8,620.1L840.2,619.4L841.6,616.2L843.0,617.1L844.4,617.5L845.8,615.9L847.1,616.0L848.4,617.2L849.7,620.7L851.0,623.3L852.3,624.6L853.6,626.5L854.9,627.2L856.2,629.6L857.6,630.6L858.9,632.0L860.2,632.7L862.6,630.0L863.8,609.9L865.2,619.1L866.9,620.9L868.6,623.1L869.9,621.2L871.3,621.3L872.7,622.0L874.1,621.2L875.3,607.5L876.5,619.3L877.9,622.1L879.4,624.3L881.2,626.0L883.0,627.9L884.3,628.3L885.7,628.5L887.1,629.5L888.5,628.7L889.8,626.2L891.2,629.2L892.6,627.9L893.8,626.9L895.1,625.5L896.4,623.7L897.7,625.1L899.0,623.9L900.2,623.0L901.5,621.5L902.8,620.4L904.1,617.6L905.4,617.0L906.6,616.0L907.9,618.1L909.2,617.1L910.5,613.7L911.8,613.5L913.4,615.3L915.0,620.0L916.6,623.1L918.0,622.5L919.4,624.4L920.9,622.8L922.3,620.6L923.8,621.9L925.7,649.5L925.7,649.5L923.8,676.3L922.2,680.4L920.6,681.4L919.0,684.7L916.6,681.1L915.0,683.6L913.4,685.2L911.8,687.1L910.2,680.1L908.6,676.9L907.0,670.3L905.6,669.6L904.2,672.8L902.9,672.5L901.5,673.9L900.1,671.7L898.7,672.2L897.4,673.9L896.0,671.6L894.6,671.9L893.3,671.9L891.9,670.3L890.5,669.4L889.1,671.3L887.8,669.1L886.3,669.8L884.9,669.3L883.4,672.4L882.0,671.2L880.6,672.7L879.3,676.2L878.1,675.6L876.9,678.8L875.3,693.1L874.1,680.4L872.7,680.9L871.3,679.0L869.9,677.6L868.6,678.7L866.9,682.1L865.2,682.3L863.8,690.7L861.4,665.5L859.0,670.3L857.4,670.5L855.8,667.5L854.2,667.9L852.6,670.6L851.0,672.0L849.4,671.5L847.8,672.3L846.2,674.8L844.6,673.9L842.9,674.4L841.2,677.1L839.8,684.7L838.6,674.1L836.8,674.6L835.0,672.7L833.5,674.3L832.1,675.9L830.7,676.2L829.2,674.3L827.8,676.3L826.3,679.8L824.9,679.7L823.5,682.1L822.0,682.4L820.6,685.9L819.0,687.9L817.4,690.9L815.8,691.9L813.4,670.3L811.8,671.9L810.2,670.4L808.6,672.7L807.1,671.5L805.7,667.7L804.3,667.7L802.8,665.8L801.4,664.3L799.9,667.0L798.4,672.5L796.9,675.6L795.4,681.1L793.6,675.5L791.8,672.7L790.3,673.8L788.9,674.0L787.5,676.2L786.0,678.5L784.6,678.7L783.1,680.4L781.7,679.2L780.3,680.8L778.8,682.0L777.4,682.3L775.9,683.1L774.4,687.3L773.1,699.1L771.9,678.0L770.2,675.1L768.4,673.7L766.6,672.7L764.9,674.1L763.2,675.9L761.8,683.5L760.6,672.9L758.2,671.5L756.7,672.8L755.3,672.7L753.9,674.0L752.4,674.1L751.0,675.1L749.6,674.4L748.2,675.6L746.8,675.3L745.4,675.5L744.0,673.7L742.6,675.1L740.8,679.9L739.0,682.3L736.6,676.3L735.1,674.9L733.7,677.7L732.3,677.3L730.8,675.6L729.4,677.5L727.8,679.3L726.2,679.1L724.6,678.7L722.9,679.6L721.2,682.3L719.8,690.7L718.6,675.9L716.8,673.6L715.0,673.9L713.5,674.0L712.1,674.9L710.7,675.0L709.2,674.8L707.8,676.3L706.2,673.6L704.6,674.3L703.0,671.5L701.5,672.3L700.1,670.2L698.7,669.1L697.2,670.6L695.8,669.1L694.4,668.0L693.1,670.5L691.8,669.9L690.4,671.1L689.1,669.4L687.8,671.4L686.4,668.4L685.1,670.1L683.8,670.3L682.3,673.2L680.9,674.3L679.5,672.6L678.0,674.0L676.6,676.3L675.0,678.4L673.4,678.2L671.8,677.5L669.4,670.3L667.8,669.9L666.2,668.1L664.6,669.1L663.1,672.1L661.7,672.1L660.3,672.6L658.8,673.6L657.4,676.3L656.0,676.3L654.6,675.8L653.3,676.7L651.9,674.8L650.5,677.8L649.2,676.8L647.8,676.3L646.2,678.9L644.6,679.4L643.0,683.5L641.4,681.1L639.8,681.0L638.2,679.9L636.6,682.5L635.1,682.0L633.5,683.5L631.5,691.9L630.3,680.3L628.6,678.7L627.3,681.8L626.1,682.7L625.0,691.9L623.8,680.3L621.4,678.7L619.6,679.0L617.8,679.9L616.3,684.2L614.8,685.7L613.5,699.1L611.1,673.9L609.4,683.5L607.6,678.1L605.8,676.3L604.3,677.3L602.8,681.3L601.3,681.5L599.8,684.7L598.2,682.6L596.6,683.3L595.0,679.9L593.2,683.6L591.4,684.7L589.6,682.0L587.8,679.9L586.0,682.4L584.2,685.9L582.4,681.3L580.6,676.3L578.4,684.6L577.5,703.9L576.3,675.4L574.8,672.8L573.4,671.5L571.6,677.9L569.8,681.1L568.0,676.2L566.2,672.7L563.8,678.7L562.2,675.9L560.6,674.4L559.0,672.7L557.4,674.6L555.8,673.9L554.2,676.3L552.6,677.2L551.0,681.6L549.4,683.5L547.8,681.7L546.2,679.1L544.6,677.5L542.8,676.7L541.0,678.7L539.6,678.8L538.1,681.9L536.9,689.5L535.7,677.9L533.8,676.3L531.4,683.5L529.8,680.9L528.2,679.0L526.6,675.1L524.8,674.6L523.0,676.3L521.4,676.8L519.8,677.6L518.2,679.9L516.8,678.9L515.3,675.9L513.9,673.1L512.4,672.1L511.0,671.5L509.6,671.6L508.1,670.9L506.7,669.2L505.2,668.5L503.8,669.1L501.4,672.7L499.6,669.6L497.8,669.1L496.2,669.4L494.6,669.7L493.0,671.5L491.4,675.5L489.8,679.1L488.2,682.3L487.0,676.3L485.3,677.0L483.6,680.6L482.2,690.7L481.0,670.6L478.6,667.9L476.8,670.7L475.0,670.3L473.8,670.8L472.6,668.5L471.4,668.7L470.2,669.7L469.0,667.9L467.6,668.4L466.2,671.3L464.7,671.0L463.3,673.3L461.9,672.6L460.5,672.2L459.1,672.6L457.7,673.9L456.3,673.7L454.9,676.1L453.7,679.3L452.4,679.6L451.4,687.8L450.2,677.5L447.8,676.1L446.3,678.5L444.7,679.6L443.1,679.6L441.7,682.2L440.4,684.9L439.2,697.2L438.0,678.6L436.1,676.1L433.8,679.6L432.3,679.6L430.9,684.2L429.5,684.4L428.1,686.4L426.7,686.7L424.6,693.0L423.7,707.8L422.5,672.7L420.8,667.9L419.7,673.7L418.1,672.8L416.5,673.8L415.0,673.7L413.6,676.2L412.2,674.8L410.8,675.2L409.3,676.8L407.9,677.3L406.5,677.9L405.1,674.6L403.7,674.2L402.3,673.5L400.9,673.7L399.6,672.5L398.3,674.3L396.9,672.9L395.6,673.4L394.3,672.3L393.0,674.1L391.6,671.4L390.3,672.6L389.1,675.3L387.9,676.8L386.8,686.7L385.6,671.2L383.9,671.4L382.1,669.1L380.5,669.9L379.0,669.7L377.4,669.1L376.1,669.7L374.7,669.1L373.4,668.6L372.1,669.5L370.7,670.6L369.4,670.1L368.0,670.2L366.7,669.0L365.5,669.2L364.2,670.0L362.9,672.8L361.6,672.7L360.3,673.2L359.1,671.1L357.8,672.1L356.5,670.5L355.2,670.8L353.9,672.6L352.6,672.0L351.3,674.2L349.9,672.5L348.6,672.4L347.2,675.3L345.9,674.1L344.6,674.9L343.0,675.8L341.4,677.4L339.9,679.6L337.5,671.4L336.2,671.8L334.8,672.4L333.5,672.6L332.1,672.3L330.8,672.5L329.5,670.3L328.1,671.4L326.7,672.5L325.3,670.4L323.9,669.7L322.5,668.6L321.1,669.1L319.7,668.8L318.4,671.0L317.1,671.2L315.7,669.6L314.4,668.9L313.0,668.3L311.7,670.2L310.3,672.0L309.0,671.0L307.7,672.2L306.3,671.8L305.0,669.3L303.6,670.4L302.3,671.4L300.9,672.1L299.5,675.0L298.1,674.8L296.7,677.5L295.3,678.4L293.7,680.9L292.1,679.2L290.6,680.8L288.2,665.5L286.8,665.7L285.4,668.4L284.0,668.5L282.6,667.5L281.2,669.1L279.6,674.1L278.0,674.5L276.5,679.6L274.1,674.9L272.6,674.0L271.0,674.8L269.4,677.3L267.9,677.4L266.3,676.8L264.7,674.9L263.3,674.6L261.9,673.2L260.5,676.4L259.1,674.4L257.7,674.9L256.4,674.0L255.0,676.8L253.7,675.0L252.3,675.5L251.0,674.1L249.7,675.7L248.3,676.1L246.7,679.6L245.2,681.9L243.6,683.1L241.9,675.6L240.1,669.1L238.6,668.0L237.2,670.7L235.7,667.7L234.2,669.1L232.7,669.5L231.1,666.2L229.5,665.5L228.0,666.3L226.4,666.9L224.8,670.2L223.4,670.0L222.0,671.5L220.6,672.6L219.2,673.5L217.8,674.9L216.4,675.3L215.0,672.8L213.6,675.1L212.2,675.6L210.8,673.7L209.4,672.7L208.1,673.4L206.8,675.7L205.5,676.1L204.2,675.2L202.9,675.9L201.6,676.1L200.3,674.4L199.0,674.9L197.3,676.9L195.5,682.0L193.7,674.5L192.0,670.2L190.6,669.1L189.3,672.3L187.9,669.7L186.6,670.5L185.3,669.8L183.9,672.8L182.6,671.4L181.3,672.3L180.0,671.6L178.7,671.2L177.4,671.3L176.1,672.7L174.8,674.6L173.5,672.5L172.1,674.4L170.8,673.7L169.6,672.7L168.3,672.8L167.0,674.9L165.7,673.1L164.4,675.4L163.1,672.7L161.8,673.8L160.5,674.6L159.2,674.8L157.9,673.7L156.2,675.6L154.4,679.6L152.8,680.7L151.3,680.1L149.7,680.8L148.4,679.2L147.0,677.1L145.7,676.8L144.4,678.3L143.0,676.4L141.7,673.9L140.3,673.7L138.6,675.2L136.8,677.3L135.0,675.0L133.3,671.4L131.9,670.9L130.5,668.7L129.1,669.3L127.7,670.3L126.2,669.1L124.8,671.4L123.4,669.6L122.0,670.2L120.6,671.8L119.2,672.6L117.4,672.8L115.7,670.2L114.2,672.5L112.7,675.4L111.3,675.4L109.8,677.3L108.2,675.4L106.7,673.2L105.1,673.7L103.9,676.0L102.7,677.6L101.6,686.7L100.4,670.1L98.1,667.9L96.7,667.1L95.4,667.8L94.1,668.7L92.7,668.6L91.4,667.2L90.0,667.5L88.7,669.1L87.1,672.1L85.6,674.2L84.0,676.1L82.6,675.2L81.2,674.8L79.8,675.4L78.4,676.6L76.9,676.1L75.6,677.7L74.3,675.4L73.0,677.5L71.7,675.0L70.4,676.9L69.1,676.7L67.8,678.0L66.5,677.7L65.2,677.3L63.9,678.4L62.5,679.5L61.2,678.9L59.8,678.7L58.5,677.7L57.2,677.9L55.8,679.6L53.5,686.7L51.9,681.8L50.3,680.5L48.8,674.9L47.2,674.6L45.6,673.0L44.1,670.2L41.7,663.2L39.4,649.5Z" fill="#adbe39" stroke="#fff" stroke-opacity="0.45" stroke-width="0.7"/></g></svg>
<div class="ab" style="left:161px;top:395px;width:706px;height:1px;background:#111;"></div>
<div class="ab" style="left:996px;top:395px;width:568px;height:1px;background:#111;"></div>
<div class="ab" style="left:35px;top:626px;width:1785px;height:1px;background:#111;"></div>
<svg style="left:161px;top:304px;" width="15" height="15" viewBox="0 0 15 15"><rect x="0" y="0" width="15" height="15" fill="#acacac"/><polygon points="0,0 15,0 0,15" fill="#efefef"/><line x1="0" y1="15" x2="15" y2="0" stroke="#6e6e6e" stroke-width="1.4"/><rect x="0" y="0" width="15" height="1" fill="#8c8c8c"/></svg>
<svg style="left:852px;top:304px;" width="15" height="15" viewBox="0 0 15 15"><rect x="0" y="0" width="15" height="15" fill="#acacac"/><polygon points="0,0 15,0 15,15" fill="#efefef"/><line x1="0" y1="0" x2="15" y2="15" stroke="#6e6e6e" stroke-width="1.4"/><rect x="0" y="0" width="15" height="1" fill="#8c8c8c"/><rect x="14" y="0" width="1" height="15" fill="#8c8c8c"/></svg>
<svg style="left:996px;top:304px;" width="15" height="15" viewBox="0 0 15 15"><rect x="0" y="0" width="15" height="15" fill="#acacac"/><polygon points="0,0 15,0 0,15" fill="#efefef"/><line x1="0" y1="15" x2="15" y2="0" stroke="#6e6e6e" stroke-width="1.4"/><rect x="0" y="0" width="15" height="1" fill="#8c8c8c"/></svg>
<svg style="left:1550px;top:304px;" width="15" height="15" viewBox="0 0 15 15"><rect x="0" y="0" width="15" height="15" fill="#acacac"/><polygon points="0,0 15,0 15,15" fill="#efefef"/><line x1="0" y1="0" x2="15" y2="15" stroke="#6e6e6e" stroke-width="1.4"/><rect x="0" y="0" width="15" height="1" fill="#8c8c8c"/><rect x="14" y="0" width="1" height="15" fill="#8c8c8c"/></svg>
<div class="ab" style="left:35px;top:535px;width:11px;height:15px;overflow:hidden">
<svg style="left:-4px;top:0px;" width="15" height="15" viewBox="0 0 15 15"><rect x="0" y="0" width="15" height="15" fill="#acacac"/><polygon points="0,0 15,0 0,15" fill="#efefef"/><line x1="0" y1="15" x2="15" y2="0" stroke="#6e6e6e" stroke-width="1.4"/><rect x="0" y="0" width="15" height="1" fill="#8c8c8c"/></svg>
</div>
<svg style="left:911px;top:535px;" width="15" height="15" viewBox="0 0 15 15"><rect x="0" y="0" width="15" height="15" fill="#acacac"/><polygon points="0,0 15,0 15,15" fill="#efefef"/><line x1="0" y1="0" x2="15" y2="15" stroke="#6e6e6e" stroke-width="1.4"/><rect x="0" y="0" width="15" height="1" fill="#8c8c8c"/><rect x="14" y="0" width="1" height="15" fill="#8c8c8c"/></svg>
<svg style="left:926px;top:535px;" width="15" height="15" viewBox="0 0 15 15"><rect x="0" y="0" width="15" height="15" fill="#acacac"/><polygon points="0,0 15,0 0,15" fill="#efefef"/><line x1="0" y1="15" x2="15" y2="0" stroke="#6e6e6e" stroke-width="1.4"/><rect x="0" y="0" width="15" height="1" fill="#8c8c8c"/></svg>
<svg style="left:1805px;top:535px;" width="15" height="15" viewBox="0 0 15 15"><rect x="0" y="0" width="15" height="15" fill="#acacac"/><polygon points="0,0 15,0 15,15" fill="#efefef"/><line x1="0" y1="0" x2="15" y2="15" stroke="#6e6e6e" stroke-width="1.4"/><rect x="0" y="0" width="15" height="1" fill="#8c8c8c"/><rect x="14" y="0" width="1" height="15" fill="#8c8c8c"/></svg>
<div class="ab" style="left:161px;top:519px;width:14px;height:14px;background:#ff0000;"></div>
<div class="ab" style="left:165px;top:525px;width:7px;height:2px;background:#808080;"></div>
<div class="ab" style="left:852px;top:519px;width:14px;height:14px;background:#ff0000;"></div>
<div class="ab" style="left:856px;top:525px;width:7px;height:2px;background:#808080;"></div>
<div class="ab" style="left:996px;top:519px;width:14px;height:14px;background:#ff0000;"></div>
<div class="ab" style="left:1000px;top:525px;width:7px;height:2px;background:#808080;"></div>
<div class="ab" style="left:1550px;top:519px;width:14px;height:14px;background:#ff0000;"></div>
<div class="ab" style="left:1554px;top:525px;width:7px;height:2px;background:#808080;"></div>
<div class="ab" style="left:35px;top:749px;width:11px;height:15px;overflow:hidden">
<div class="ab" style="left:-3.5px;top:0px;width:14px;height:14px;background:#ff0000;"></div>
<div class="ab" style="left:0.5px;top:6px;width:7px;height:2px;background:#808080;"></div>
</div>
<div class="ab" style="left:911px;top:749px;width:14px;height:14px;background:#ff0000;"></div>
<div class="ab" style="left:915px;top:755px;width:7px;height:2px;background:#808080;"></div>
<div class="ab" style="left:926px;top:749px;width:14px;height:14px;background:#ff0000;"></div>
<div class="ab" style="left:930px;top:755px;width:7px;height:2px;background:#808080;"></div>
<div class="ab" style="left:1805px;top:749px;width:14px;height:14px;background:#ff0000;"></div>
<div class="ab" style="left:1809px;top:755px;width:7px;height:2px;background:#808080;"></div>
<svg style="left:10.6px;top:315.4px;" width="13.2" height="12.3" viewBox="0 0 13.2 12.3"><path transform="scale(0.8742,0.8200)" fill-rule="evenodd" fill="#c2ced6" d="M5.7,0 H9.2 L13.4,13 H15.1 V15 H10.0 V13 H10.7 L10.1,11 H5.0 L4.4,13 H5.1 V15 H0 V13 H1.7 Z M6.0,8.1 H9.1 L7.55,3.6 Z"/></svg>
<svg style="left:9px;top:340px;" width="16" height="14" viewBox="0 0 16 14"><rect x="0" y="3.6" width="3" height="6" fill="#e8edf0"/><polygon points="2.8,3.6 7.3,0.3 7.3,12.9 2.8,9.6" fill="#e8edf0"/><path d="M8.75,4.95 A1.9,1.9 0 0 1 8.75,8.25" fill="none" stroke="#e8edf0" stroke-width="1.3"/><path d="M10.24,2.70 A4.6,4.6 0 0 1 10.24,10.50" fill="none" stroke="#e8edf0" stroke-width="1.3"/><path d="M11.27,0.07 A7.4,7.4 0 0 1 11.27,13.13" fill="none" stroke="#e8edf0" stroke-width="1.3"/></svg>
<svg style="left:9px;top:571px;" width="16" height="14" viewBox="0 0 16 14"><rect x="0" y="3.6" width="3" height="6" fill="#e8edf0"/><polygon points="2.8,3.6 7.3,0.3 7.3,12.9 2.8,9.6" fill="#e8edf0"/><path d="M8.75,4.95 A1.9,1.9 0 0 1 8.75,8.25" fill="none" stroke="#e8edf0" stroke-width="1.3"/><path d="M10.24,2.70 A4.6,4.6 0 0 1 10.24,10.50" fill="none" stroke="#e8edf0" stroke-width="1.3"/><path d="M11.27,0.07 A7.4,7.4 0 0 1 11.27,13.13" fill="none" stroke="#e8edf0" stroke-width="1.3"/></svg>
<svg style="left:9px;top:365px;" width="15" height="14" viewBox="0 0 15 14"><path d="M9,7 V4.5 A3,3 0 0 1 15,4.5 V6" fill="none" stroke="#e8edf0" stroke-width="2"/><rect x="0" y="7" width="11" height="7" rx="1" fill="#e8edf0"/></svg>
<svg style="left:10px;top:595px;" width="12" height="15" viewBox="0 0 12 15"><path d="M2.5,7 V4.5 A3.5,3.5 0 0 1 9.5,4.5 V7" fill="none" stroke="#e8edf0" stroke-width="2"/><rect x="0" y="7" width="12" height="8" rx="1" fill="#e8edf0"/></svg>
<svg style="left:9.8px;top:545.8px;" width="14.4" height="14" viewBox="0 0 14.4 14"><g transform="scale(1.0286,0.9859)" fill="#c2ced6"><polygon points="3.2,2.5 14,0 14,2.8 3.2,5.3"/><rect x="3.2" y="2.5" width="2.6" height="10"/><rect x="11.4" y="0" width="2.6" height="11.5"/><ellipse cx="2.7" cy="12.2" rx="2.7" ry="2" transform="rotate(-18 2.7 12.2)"/><ellipse cx="11.3" cy="10.2" rx="2.75" ry="2.1" transform="rotate(-18 11.3 10.2)"/></g></svg>
<div class="ab" style="left:35px;top:764px;width:1785px;height:2px;background:#e3e8ec;"></div>
<svg style="left:30.8px;top:781px;" width="1789.2" height="12" viewBox="0 0 1789.2 12"><rect x="4.199999999999999" y="0" width="1785" height="2" fill="#333"/><rect x="21.23" y="2" width="2" height="3.5" fill="#333"/><rect x="43.46" y="2" width="2" height="3.5" fill="#333"/><rect x="65.70" y="2" width="2" height="3.5" fill="#333"/><rect x="87.93" y="2" width="2" height="3.5" fill="#333"/><rect x="110.16" y="2" width="2" height="8" fill="#333"/><rect x="132.39" y="2" width="2" height="3.5" fill="#333"/><rect x="154.62" y="2" width="2" height="3.5" fill="#333"/><rect x="176.86" y="2" width="2" height="3.5" fill="#333"/><rect x="199.09" y="2" width="2" height="3.5" fill="#333"/><rect x="221.32" y="2" width="2" height="8" fill="#333"/><rect x="243.55" y="2" width="2" height="3.5" fill="#333"/><rect x="265.78" y="2" width="2" height="3.5" fill="#333"/><rect x="288.02" y="2" width="2" height="3.5" fill="#333"/><rect x="310.25" y="2" width="2" height="3.5" fill="#333"/><rect x="332.48" y="2" width="2" height="8" fill="#333"/><rect x="354.71" y="2" width="2" height="3.5" fill="#333"/><rect x="376.94" y="2" width="2" height="3.5" fill="#333"/><rect x="399.18" y="2" width="2" height="3.5" fill="#333"/><rect x="421.41" y="2" width="2" height="3.5" fill="#333"/><rect x="443.64" y="2" width="2" height="8" fill="#333"/><rect x="465.87" y="2" width="2" height="3.5" fill="#333"/><rect x="488.10" y="2" width="2" height="3.5" fill="#333"/><rect x="510.34" y="2" width="2" height="3.5" fill="#333"/><rect x="532.57" y="2" width="2" height="3.5" fill="#333"/><rect x="554.80" y="2" width="2" height="8" fill="#333"/><rect x="577.03" y="2" width="2" height="3.5" fill="#333"/><rect x="599.26" y="2" width="2" height="3.5" fill="#333"/><rect x="621.50" y="2" width="2" height="3.5" fill="#333"/><rect x="643.73" y="2" width="2" height="3.5" fill="#333"/><rect x="665.96" y="2" width="2" height="8" fill="#333"/><rect x="688.19" y="2" width="2" height="3.5" fill="#333"/><rect x="710.42" y="2" width="2" height="3.5" fill="#333"/><rect x="732.66" y="2" width="2" height="3.5" fill="#333"/><rect x="754.89" y="2" width="2" height="3.5" fill="#333"/><rect x="777.12" y="2" width="2" height="8" fill="#333"/><rect x="799.35" y="2" width="2" height="3.5" fill="#333"/><rect x="821.58" y="2" width="2" height="3.5" fill="#333"/><rect x="843.82" y="2" width="2" height="3.5" fill="#333"/><rect x="866.05" y="2" width="2" height="3.5" fill="#333"/><rect x="888.28" y="2" width="2" height="8" fill="#333"/><rect x="910.51" y="2" width="2" height="3.5" fill="#333"/><rect x="932.74" y="2" width="2" height="3.5" fill="#333"/><rect x="954.98" y="2" width="2" height="3.5" fill="#333"/><rect x="977.21" y="2" width="2" height="3.5" fill="#333"/><rect x="999.44" y="2" width="2" height="8" fill="#333"/><rect x="1021.67" y="2" width="2" height="3.5" fill="#333"/><rect x="1043.90" y="2" width="2" height="3.5" fill="#333"/><rect x="1066.14" y="2" width="2" height="3.5" fill="#333"/><rect x="1088.37" y="2" width="2" height="3.5" fill="#333"/><rect x="1110.60" y="2" width="2" height="8" fill="#333"/><rect x="1132.83" y="2" width="2" height="3.5" fill="#333"/><rect x="1155.06" y="2" width="2" height="3.5" fill="#333"/><rect x="1177.30" y="2" width="2" height="3.5" fill="#333"/><rect x="1199.53" y="2" width="2" height="3.5" fill="#333"/><rect x="1221.76" y="2" width="2" height="8" fill="#333"/><rect x="1243.99" y="2" width="2" height="3.5" fill="#333"/><rect x="1266.22" y="2" width="2" height="3.5" fill="#333"/><rect x="1288.46" y="2" width="2" height="3.5" fill="#333"/><rect x="1310.69" y="2" width="2" height="3.5" fill="#333"/><rect x="1332.92" y="2" width="2" height="8" fill="#333"/><rect x="1355.15" y="2" width="2" height="3.5" fill="#333"/><rect x="1377.38" y="2" width="2" height="3.5" fill="#333"/><rect x="1399.62" y="2" width="2" height="3.5" fill="#333"/><rect x="1421.85" y="2" width="2" height="3.5" fill="#333"/><rect x="1444.08" y="2" width="2" height="8" fill="#333"/><rect x="1466.31" y="2" width="2" height="3.5" fill="#333"/><rect x="1488.54" y="2" width="2" height="3.5" fill="#333"/><rect x="1510.78" y="2" width="2" height="3.5" fill="#333"/><rect x="1533.01" y="2" width="2" height="3.5" fill="#333"/><rect x="1555.24" y="2" width="2" height="8" fill="#333"/><rect x="1577.47" y="2" width="2" height="3.5" fill="#333"/><rect x="1599.70" y="2" width="2" height="3.5" fill="#333"/><rect x="1621.94" y="2" width="2" height="3.5" fill="#333"/><rect x="1644.17" y="2" width="2" height="3.5" fill="#333"/><rect x="1666.40" y="2" width="2" height="8" fill="#333"/><rect x="1688.63" y="2" width="2" height="3.5" fill="#333"/><rect x="1710.86" y="2" width="2" height="3.5" fill="#333"/><rect x="1733.10" y="2" width="2" height="3.5" fill="#333"/><rect x="1755.33" y="2" width="2" height="3.5" fill="#333"/><rect x="1777.56" y="2" width="2" height="8" fill="#333"/></svg>
<div class="ab" style="left:35px;top:781px;width:1785px;height:30px;overflow:hidden"><div class="t" style="left:-1.20px;top:12.03px;font-size:10px;color:#555">00:00</div><div class="t" style="left:109.96px;top:12.03px;font-size:10px;color:#555">00:05</div><div class="t" style="left:221.12px;top:12.03px;font-size:10px;color:#555">00:10</div><div class="t" style="left:332.28px;top:12.03px;font-size:10px;color:#555">00:15</div><div class="t" style="left:443.44px;top:12.03px;font-size:10px;color:#555">00:20</div><div class="t" style="left:554.60px;top:12.03px;font-size:10px;color:#555">00:25</div><div class="t" style="left:665.76px;top:12.03px;font-size:10px;color:#555">00:30</div><div class="t" style="left:776.92px;top:12.03px;font-size:10px;color:#555">00:35</div><div class="t" style="left:888.08px;top:12.03px;font-size:10px;color:#555">00:40</div><div class="t" style="left:999.24px;top:12.03px;font-size:10px;color:#555">00:45</div><div class="t" style="left:1110.40px;top:12.03px;font-size:10px;color:#555">00:50</div><div class="t" style="left:1221.56px;top:12.03px;font-size:10px;color:#555">00:55</div><div class="t" style="left:1332.72px;top:12.03px;font-size:10px;color:#555">01:00</div><div class="t" style="left:1443.88px;top:12.03px;font-size:10px;color:#555">01:05</div><div class="t" style="left:1555.04px;top:12.03px;font-size:10px;color:#555">01:10</div><div class="t" style="left:1666.20px;top:12.03px;font-size:10px;color:#555">01:15</div><div class="t" style="left:1777.36px;top:12.03px;font-size:10px;color:#555">01:20</div></div>
<div class="ab" style="left:32px;top:304px;width:3px;height:501px;background:#f25a54;"></div>
<div class="ab" style="left:31px;top:304px;width:2px;height:460px;background:#0c7f8c;"></div>
<svg style="left:31px;top:766px;" width="12" height="15" viewBox="0 0 12 15"><polygon points="0,0 12,7.5 0,15" fill="#0c7f8c"/></svg>
<div class="ab" style="left:0px;top:807px;width:1820px;height:18px;background:#f1f1f1;"></div>
<svg style="left:7px;top:812px;" width="5" height="8" viewBox="0 0 5 8"><polygon points="5,0 0,4 5,8" fill="#a3a3a3"/></svg>
<svg style="left:1810px;top:812px;" width="5" height="8" viewBox="0 0 5 8"><polygon points="0,0 5,4 0,8" fill="#a3a3a3"/></svg>
<div class="ab" style="left:1820px;top:92px;width:97px;height:733px;background:#ebeff2;"></div>
<div class="ab" style="left:1820px;top:92px;width:8px;height:733px;background:linear-gradient(to right, rgba(190,200,208,0.8), rgba(235,239,242,0));"></div>
<div class="ab" style="left:1830px;top:94px;width:65px;height:68px;background:#fff;border:1px solid #d5dbe0;border-radius:6px"></div>
<svg style="left:1845px;top:98px;" width="36" height="34" viewBox="0 0 36 34"><path d="M27.01,18.53 L19.23,26.30 A7.2,7.2 0 0 1 9.02,16.09 L18.07,7.04 A4.9,4.9 0 0 1 25.03,14.00 L16.83,22.20 A2.3,2.3 0 0 1 13.61,18.99 L20.54,12.06" fill="none" stroke="#5f7380" stroke-width="2.6"/></svg>
<div class="t" style="left:1845px;top:136.88px;font-size:15.5px;color:#5f7380;font-weight:400;">Clips</div>
<div class="ab" style="left:1546px;top:104px;width:221px;height:93px;background:rgba(160,206,250,0.93);"></div>
<div class="t" style="left:1559px;top:138.30px;font-size:30px;color:#000;font-weight:400;letter-spacing:-0.3px">Complete view</div>
<div class="ab" style="left:1583px;top:480px;width:219px;height:104px;background:rgba(160,206,250,0.93);"></div>
<div class="t" style="left:1601.5px;top:520.11px;font-size:30px;color:#000;font-weight:400;">Timeline view</div>
<div class="ab" style="left:0px;top:825px;width:1917px;height:84px;background:#35444f;"></div>
<svg style="left:511px;top:859px;" width="23" height="23" viewBox="0 0 23 23"><rect x="1" y="1" width="21" height="21" rx="1.5" fill="none" stroke="#7d8d99" stroke-width="1.1" stroke-dasharray="3,2"/><circle cx="7.5" cy="8" r="2.2" fill="none" stroke="#7d8d99" stroke-width="1.1"/><circle cx="7.5" cy="15" r="2.2" fill="none" stroke="#7d8d99" stroke-width="1.1"/><path d="M9.5,9.5 L17,16 M9.5,13.5 L17,7" stroke="#7d8d99" stroke-width="1.1"/></svg>
<svg style="left:553px;top:859px;" width="29" height="23" viewBox="0 0 29 23"><path d="M5,1 H2 V22 H5 M24,1 H27 V22 H24" fill="none" stroke="#7d8d99" stroke-width="1.1" stroke-dasharray="3,2"/><circle cx="11" cy="8" r="2.2" fill="none" stroke="#7d8d99" stroke-width="1.1"/><circle cx="11" cy="15" r="2.2" fill="none" stroke="#7d8d99" stroke-width="1.1"/><path d="M13,9.5 L20,16 M13,13.5 L20,7" stroke="#7d8d99" stroke-width="1.1"/></svg>
<svg style="left:601px;top:858px;" width="23" height="25" viewBox="0 0 23 25"><rect x="1" y="4" width="8" height="15" fill="none" stroke="#7d8d99" stroke-width="1.2"/><rect x="14" y="4" width="8" height="15" fill="none" stroke="#7d8d99" stroke-width="1.2"/><line x1="13" y1="0" x2="13" y2="25" stroke="#7d8d99" stroke-width="1.2"/></svg>
<svg style="left:642px;top:859px;" width="33" height="23" viewBox="0 0 33 23"><path d="M20,4 H23 A7.5,7.5 0 0 1 23,19 H20" fill="none" stroke="#aebfcb" stroke-width="3.2"/><rect x="15" y="2" width="5" height="5" fill="#aebfcb"/><rect x="15" y="16" width="5" height="5" fill="#aebfcb"/><path d="M0,13 L6,9 L7,11.5 L13,8 L10,12.5 L12,12.5 L7,16 L6,13.5 Z" fill="#aebfcb"/></svg>
<svg style="left:788px;top:846px;" width="50" height="50" viewBox="0 0 50 50"><circle cx="25" cy="25" r="24" fill="none" stroke="#a9b7c1" stroke-width="2"/></svg>
<svg style="left:848px;top:846px;" width="50" height="50" viewBox="0 0 50 50"><circle cx="25" cy="25" r="24" fill="none" stroke="#a9b7c1" stroke-width="2"/></svg>
<svg style="left:908px;top:846px;" width="50" height="50" viewBox="0 0 50 50"><circle cx="25" cy="25" r="24" fill="none" stroke="#a9b7c1" stroke-width="2"/></svg>
<svg style="left:968px;top:846px;" width="50" height="50" viewBox="0 0 50 50"><circle cx="25" cy="25" r="24" fill="none" stroke="#a9b7c1" stroke-width="2"/></svg>
<svg style="left:803px;top:861px;" width="20" height="20" viewBox="0 0 20 20"><circle cx="9.7" cy="10" r="8.9" fill="#d40f10"/></svg>
<svg style="left:863px;top:860px;" width="20" height="22" viewBox="0 0 20 22"><polygon points="1.9,2.6 17.4,11 1.9,19.4" fill="#8fd414" stroke="#8fd414" stroke-width="1.4" stroke-linejoin="round"/></svg>
<svg style="left:893px;top:845px;" width="10" height="6" viewBox="0 0 10 6"><polyline points="1,5 5,1 9,5" fill="none" stroke="#c9d3da" stroke-width="1.5"/></svg>
<svg style="left:900px;top:850px;" width="110" height="40" viewBox="0 0 110 40"><rect x="32" y="11" width="2" height="18" fill="#d2102a"/><path d="M20.8,19.4 H30 M26,15.5 L30,19.4 L26,23.3 M44.5,19.4 H36 M40,15.5 L36,19.4 L40,23.3" fill="none" stroke="#a9b7c1" stroke-width="1.3"/><rect x="81.2" y="11" width="2.6" height="18" fill="#a9b7c1"/><polygon points="85.2,20 95,11.6 95,28.4" fill="none" stroke="#a9b7c1" stroke-width="1.5"/><polygon points="95.4,20 103.2,11.6 103.2,28.4" fill="none" stroke="#a9b7c1" stroke-width="1.5"/></svg>
<div class="t" style="left:1048.5px;top:844.72px;font-size:12.5px;color:#aebcc7;font-weight:400;letter-spacing:-0.5px">-60</div>
<div class="t" style="left:1114px;top:844.72px;font-size:12.5px;color:#aebcc7;font-weight:400;letter-spacing:-0.5px">-30</div>
<div class="t" style="left:1189px;top:844.72px;font-size:12.5px;color:#aebcc7;font-weight:400;letter-spacing:-0.5px">-12</div>
<div class="t" style="left:1237.5px;top:844.72px;font-size:12.5px;color:#aebcc7;font-weight:400;letter-spacing:-0.5px">-6</div>
<div class="t" style="left:1280.5px;top:844.72px;font-size:12.5px;color:#aebcc7;font-weight:400;letter-spacing:-0.5px">-3</div>
<div class="t" style="left:1340.3px;top:844.72px;font-size:12.5px;color:#aebcc7;font-weight:400;letter-spacing:-0.5px">0</div>
<svg style="left:1051px;top:859px;" width="300" height="20" viewBox="0 0 300 20"><rect x="0" y="0" width="3" height="20" fill="rgb(40, 78, 10)"/><rect x="6" y="0" width="3" height="20" fill="rgb(40, 78, 10)"/><rect x="12" y="0" width="3" height="20" fill="rgb(40, 78, 10)"/><rect x="18" y="0" width="3" height="20" fill="rgb(40, 78, 10)"/><rect x="24" y="0" width="3" height="20" fill="rgb(40, 78, 10)"/><rect x="30" y="0" width="3" height="20" fill="rgb(40, 78, 10)"/><rect x="36" y="0" width="3" height="20" fill="rgb(40, 78, 10)"/><rect x="42" y="0" width="3" height="20" fill="rgb(40, 78, 10)"/><rect x="48" y="0" width="3" height="20" fill="rgb(40, 78, 10)"/><rect x="54" y="0" width="3" height="20" fill="rgb(40, 78, 10)"/><rect x="60" y="0" width="3" height="20" fill="rgb(40, 78, 10)"/><rect x="66" y="0" width="3" height="20" fill="rgb(40, 78, 10)"/><rect x="72" y="0" width="3" height="20" fill="rgb(40, 78, 10)"/><rect x="78" y="0" width="3" height="20" fill="rgb(40, 78, 10)"/><rect x="84" y="0" width="3" height="20" fill="rgb(41, 79, 10)"/><rect x="90" y="0" width="3" height="20" fill="rgb(41, 79, 10)"/><rect x="96" y="0" width="3" height="20" fill="rgb(41, 79, 10)"/><rect x="102" y="0" width="3" height="20" fill="rgb(41, 79, 10)"/><rect x="108" y="0" width="3" height="20" fill="rgb(41, 79, 10)"/><rect x="114" y="0" width="3" height="20" fill="rgb(41, 79, 10)"/><rect x="120" y="0" width="3" height="20" fill="rgb(41, 79, 10)"/><rect x="126" y="0" width="3" height="20" fill="rgb(41, 79, 10)"/><rect x="132" y="0" width="3" height="20" fill="rgb(41, 79, 10)"/><rect x="138" y="0" width="3" height="20" fill="rgb(41, 79, 10)"/><rect x="144" y="0" width="3" height="20" fill="rgb(41, 79, 10)"/><rect x="150" y="0" width="3" height="20" fill="rgb(41, 79, 10)"/><rect x="156" y="0" width="3" height="20" fill="rgb(41, 79, 10)"/><rect x="162" y="0" width="3" height="20" fill="rgb(41, 79, 10)"/><rect x="168" y="0" width="3" height="20" fill="rgb(42, 80, 10)"/><rect x="174" y="0" width="3" height="20" fill="rgb(49, 84, 13)"/><rect x="180" y="0" width="3" height="20" fill="rgb(56, 88, 16)"/><rect x="186" y="0" width="3" height="20" fill="rgb(63, 92, 19)"/><rect x="192" y="0" width="3" height="20" fill="rgb(70, 96, 22)"/><rect x="198" y="0" width="3" height="20" fill="rgb(78, 100, 25)"/><rect x="204" y="0" width="3" height="20" fill="rgb(81, 101, 27)"/><rect x="210" y="0" width="3" height="20" fill="rgb(85, 102, 30)"/><rect x="216" y="0" width="3" height="20" fill="rgb(89, 103, 33)"/><rect x="222" y="0" width="3" height="20" fill="rgb(93, 104, 35)"/><rect x="228" y="0" width="3" height="20" fill="rgb(97, 105, 38)"/><rect x="234" y="0" width="3" height="20" fill="rgb(100, 106, 41)"/><rect x="240" y="0" width="3" height="20" fill="rgb(104, 107, 44)"/><rect x="246" y="0" width="3" height="20" fill="rgb(108, 108, 46)"/><rect x="252" y="0" width="3" height="20" fill="rgb(112, 109, 49)"/><rect x="258" y="0" width="3" height="20" fill="rgb(116, 110, 52)"/><rect x="264" y="0" width="3" height="20" fill="rgb(120, 112, 55)"/><rect x="270" y="0" width="3" height="20" fill="rgb(125, 100, 48)"/><rect x="276" y="0" width="3" height="20" fill="rgb(120, 78, 38)"/><rect x="282" y="0" width="3" height="20" fill="rgb(115, 55, 28)"/><rect x="288" y="0" width="3" height="20" fill="rgb(112, 28, 14)"/><rect x="294" y="0" width="3" height="20" fill="rgb(105, 0, 0)"/></svg>
<svg style="left:1049px;top:889px;" width="302" height="7" viewBox="0 0 302 7"><rect x="0.5" y="1" width="301" height="5" rx="2.5" fill="#fff"/><rect x="0.5" y="1" width="240" height="5" rx="2.5" fill="#9aadb9"/></svg>
<svg style="left:1282px;top:886px;" width="14" height="14" viewBox="0 0 14 14"><circle cx="7" cy="7" r="5.4" fill="#9aadb9" stroke="#fff" stroke-width="1.3"/></svg>
<svg style="left:1367px;top:862px;" width="23" height="19" viewBox="0 0 23 19"><rect x="0.3" y="6.3" width="4.7" height="6.7" fill="#a9b7c1"/><polygon points="4.8,6.3 10,2.3 10,16 4.8,13" fill="#a9b7c1"/><path d="M11.88,7.23 A2.4,2.4 0 0 1 11.88,11.17" fill="none" stroke="#a9b7c1" stroke-width="1.6"/><path d="M13.47,4.45 A5.6,5.6 0 0 1 13.47,13.95" fill="none" stroke="#a9b7c1" stroke-width="1.6"/><path d="M15.15,1.15 A9.3,9.3 0 0 1 15.15,17.25" fill="none" stroke="#a9b7c1" stroke-width="1.6"/></svg>
</body></html>
